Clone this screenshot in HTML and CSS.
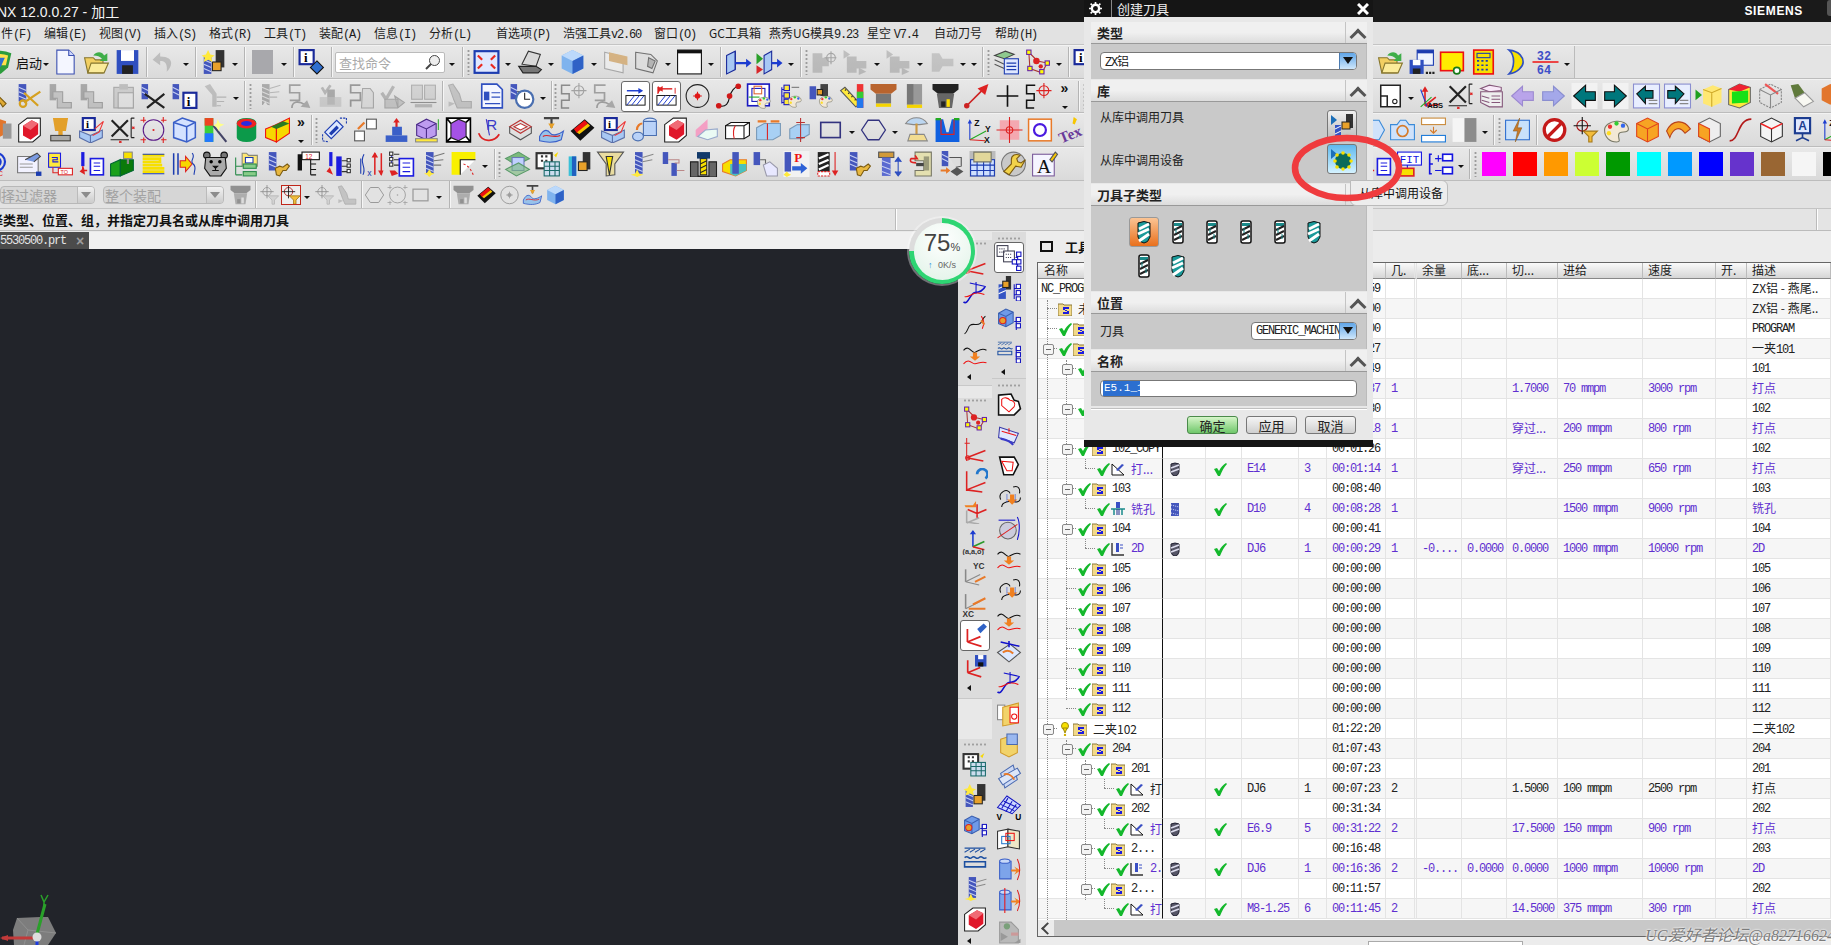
FILE: index.html
```html
<!DOCTYPE html>
<html lang="zh-CN">
<head>
<meta charset="utf-8">
<title>NX 12.0.0.27 - 加工</title>
<link rel="stylesheet" href="styles.css">
</head>
<body>
<svg class="sprite" xmlns="http://www.w3.org/2000/svg">
<symbol id="logo" viewBox="0 0 24 24"><path d="M2 4q10-5 20 0l-3 13-7 6-7-6z" fill="#2c9c3c"/><path d="M5 6q7-3 14 0l-2 9H7z" fill="#ffe04a"/><path d="M9 8h7l-4 9z" fill="#2f6fd0"/></symbol>
<symbol id="doc" viewBox="0 0 24 24"><path d="M4 1h11l5 5v17H4z" fill="#f4f6ff" stroke="#3a4fb0"/><path d="M15 1v5h5" fill="#cfd8ff" stroke="#3a4fb0"/></symbol>
<symbol id="open" viewBox="0 0 24 24"><path d="M1 8h8l2 2h7v12H4z" fill="#f2cf62" stroke="#86762e"/><path d="M4 22l3-9h16l-4 9z" fill="#fbeb9a" stroke="#86762e"/><path d="M9 6c3-4 8-4 10 0l3-2v7h-7l2-2c-2-2-4-3-8-3" fill="#3fae49"/></symbol>
<symbol id="save" viewBox="0 0 24 24"><path d="M2 1h20v22H2z" fill="#2f4fc0"/><rect x="6" y="1" width="12" height="10" fill="#fff"/><rect x="7" y="15" width="10" height="8" fill="#222"/></symbol>
<symbol id="undo" viewBox="0 0 24 24"><path d="M8 3L1 10l7 5v-4c4 0 7 2 6 10 5-4 8-14-6-14z" fill="#7c8ea8"/></symbol>
<symbol id="mt" viewBox="0 0 24 24"><rect x="3" y="7" width="7" height="16" fill="#4456bc"/><path d="M3 10l7 3M3 14l7 3M3 18l7 3" stroke="#c6cff2"/><rect x="14" y="1" width="8" height="16" fill="#333"/><rect x="11" y="12" width="8" height="8" fill="#e8a12a" stroke="#222"/><path d="M7 1l2 4 4 1-3 2 1 4-4-2-4 2 1-4-3-2 4-1z" fill="#ffe93c"/></symbol>
<symbol id="inf" viewBox="0 0 24 24"><rect x="1" y="1" width="13" height="13" fill="#fff" stroke="#1a2a9a" stroke-width="2"/><text x="5" y="12" font-size="12" font-weight="700" font-family="Liberation Serif">i</text><path d="M17 11l6 6-6 6-6-6z" fill="#2f6fd0" stroke="#111"/></symbol>
<symbol id="fit" viewBox="0 0 24 24"><rect x="1" y="2" width="22" height="20" fill="#dfe8ff" stroke="#1c3cb0" stroke-width="2"/><path d="M4 6l4 4M20 6l-4 4M4 18l4-4M20 18l-4-4" stroke="#ea2a20" stroke-width="2"/></symbol>
<symbol id="rend" viewBox="0 0 24 24"><path d="M5 14L11 2l11 3-4 11z" fill="#d9d9d9" stroke="#333"/><path d="M2 16l16 0 5 3-3 3H6z" fill="#777" stroke="#222"/></symbol>
<symbol id="cub" viewBox="0 0 24 24"><path d="M2 6l10-5 10 5v12l-10 5-10-5z" fill="#7fb3ee"/><path d="M2 6l10 5 10-5-10-5z" fill="#bcd9fb"/><path d="M12 11l10-5v12l-10 5z" fill="#2f62c6"/></symbol>
<symbol id="tan" viewBox="0 0 24 24"><path d="M2 3l17 4v15L2 18z" fill="#eee" stroke="#999"/><path d="M6 3l17 4v8L6 11z" fill="#dba65c"/></symbol>
<symbol id="gf" viewBox="0 0 24 24"><path d="M2 3l14 2 6 6-4 11-16-4z" fill="#ddd" stroke="#555"/><path d="M14 8l6 3-3 7-4-2z" fill="#aaa" stroke="#555"/></symbol>
<symbol id="win" viewBox="0 0 24 24"><rect x="1" y="1" width="22" height="22" fill="#fff" stroke="#111"/><rect x="1" y="1" width="22" height="3" fill="#111"/></symbol>
<symbol id="ba" viewBox="0 0 24 24"><path d="M1 6l8-4v17l-8 4z" fill="#a8c8f4" stroke="#1a2a9a"/><path d="M9 2v17" stroke="#1a2a9a"/><path d="M9 12h10v-3l5 4-5 4v-3H9z" fill="#1c3cd0"/></symbol>
<symbol id="ba2" viewBox="0 0 24 24"><path d="M7 6l7-4v17l-7 4z" fill="#a8c8f4" stroke="#1a2a9a"/><path d="M14 12h5V9l5 4-5 4v-3h-5z" fill="#1c3cd0"/><path d="M0 4l6 5-6 5z" fill="#2aa02a"/><path d="M0 15l6 4-6 4z" fill="#d8262a"/></symbol>
<symbol id="tp" viewBox="0 0 24 24"><path d="M1 4h9v4h6v8h-6v6H1z" fill="#888"/><circle cx="18" cy="8" r="4" fill="none" stroke="#b33"/><path d="M12 8h11M18 2v12" stroke="#b33"/></symbol>
<symbol id="tp2" viewBox="0 0 24 24"><path d="M1 1l6 4-6 4z" fill="#5f93bb"/><path d="M4 7h9v4h9v7h-9v4H4z" fill="#888"/><path d="M15 17l7 4-7 3z" fill="#957ca8"/></symbol>
<symbol id="tp4" viewBox="0 0 24 24"><path d="M3 4h7l3 5h10v7H13l-3 5H3z" fill="#9a9a9a"/></symbol>
<symbol id="lst" viewBox="0 0 24 24"><path d="M1 6l10-4 8 3-9 4z" fill="#8fc98f" stroke="#444"/><path d="M1 10l9 4M1 14l9 4" stroke="#555" fill="none"/><rect x="10" y="9" width="13" height="14" fill="#dfe8ff" stroke="#1c3cb0"/><path d="M12 13h9M12 16h9M12 19h9" stroke="#1c3cb0"/></symbol>
<symbol id="net" viewBox="0 0 24 24"><path d="M4 3l8 8 9 2-5 9-11-4z" fill="none" stroke="#a33"/><circle cx="11" cy="11" r="3" fill="#d22"/><circle cx="15" cy="16" r="2" fill="#d22"/><g fill="#ff0" stroke="#62a"><rect x="2" y="1" width="4" height="4"/><rect x="19" y="11" width="4" height="4"/><rect x="14" y="19" width="4" height="4"/><rect x="3" y="16" width="4" height="4"/></g></symbol>
<symbol id="wrn" viewBox="0 0 24 24"><path d="M10 10l9 9-3 3-2-3-3-3-5 2-4-3 3-6 4 1z" fill="#e0aa35" stroke="#7a5a10"/></symbol>
<symbol id="msc" viewBox="0 0 24 24"><rect x="2" y="1" width="7" height="16" fill="#4456bc"/><path d="M2 4l7 3M2 8l7 3M2 12l7 3" stroke="#c6cff2"/><path d="M7 18l15-10M7 9l13 12" stroke="#d5a020" stroke-width="2"/><circle cx="6" cy="19" r="3" fill="none" stroke="#d5a020" stroke-width="2"/></symbol>
<symbol id="cp" viewBox="0 0 24 24"><rect x="2" y="1" width="6" height="15" fill="#555"/><path d="M5 8h9v10h8v5H9V14H5z" fill="#999" stroke="#444"/></symbol>
<symbol id="clip" viewBox="0 0 24 24"><rect x="4" y="4" width="18" height="19" fill="#c9a98c" stroke="#555"/><rect x="9" y="1" width="8" height="5" fill="#888"/><rect x="8" y="9" width="14" height="14" fill="#ddd" stroke="#555"/></symbol>
<symbol id="mx" viewBox="0 0 24 24"><rect x="1" y="1" width="6" height="14" fill="#4456bc"/><path d="M1 4l6 3M1 8l6 3" stroke="#c6cff2"/><path d="M4 10l18 13M22 10L6 23" stroke="#222" stroke-width="2"/></symbol>
<symbol id="mi" viewBox="0 0 24 24"><rect x="1" y="1" width="6" height="14" fill="#4456bc"/><path d="M1 4l6 3M1 8l6 3" stroke="#c6cff2"/><rect x="11" y="9" width="12" height="14" fill="#fff" stroke="#1a2a9a" stroke-width="2"/><text x="14" y="21" font-size="12" font-weight="700" font-family="Liberation Serif">i</text></symbol>
<symbol id="gt" viewBox="0 0 24 24"><path d="M2 3l5-2 6 9v12h-4V11z" fill="#8b8b8b"/><path d="M13 13h9M13 17h7M13 21h4" stroke="#777"/></symbol>
<symbol id="mf" viewBox="0 0 24 24"><rect x="6" y="1" width="7" height="20" fill="#4456bc"/><path d="M6 4l7 3M6 8l7 3M6 12l7 3M6 16l7 3" stroke="#c6cff2"/><path d="M13 5l10-3M13 9l9-1M13 13l7 0" stroke="#777" fill="none"/><path d="M9 17l2 3 3 1-3 1-2 2-2-2-3-1 3-1z" fill="#ffe93c"/></symbol>
<symbol id="sa" viewBox="0 0 24 24"><path d="M13 2H3v7h9v7H3M5 23c0-6 6-7 12-3" fill="none" stroke="#444" stroke-width="1.6"/><path d="M13 22l6-6 3 7z" fill="#2f62c6"/></symbol>
<symbol id="chk" viewBox="0 0 24 24"><path d="M4 4l3 5 5-7" fill="none" stroke="#1d9a1d" stroke-width="2.5"/><rect x="9" y="6" width="7" height="14" fill="#4456bc"/><path d="M2 22V13h20v9z" fill="#b88b56" fill-opacity=".7"/></symbol>
<symbol id="sp" viewBox="0 0 24 24"><path d="M11 2H2v7h9v7H2v6" fill="none" stroke="#333" stroke-width="1.6"/><path d="M13 5h7l3 4v14H12z" fill="#ccc" stroke="#555"/></symbol>
<symbol id="ck2" viewBox="0 0 24 24"><path d="M2 9l4 6 7-12" fill="none" stroke="#1d9a1d" stroke-width="3"/><path d="M5 15h12v8H5zM14 12l9 6-6 5z" fill="#999" stroke="#555"/></symbol>
<symbol id="bk" viewBox="0 0 24 24"><rect x="1" y="2" width="10" height="13" fill="#bbb" stroke="#666"/><rect x="13" y="2" width="10" height="13" fill="#bbb" stroke="#666"/><path d="M0 18h24" stroke="#222"/><path d="M4 21h16" stroke="#77a" stroke-width="3"/></symbol>
<symbol id="gm" viewBox="0 0 24 24"><path d="M1 2l4-1 6 9 2 7h9v6H9l-3-7z" fill="#999" stroke="#666"/><path d="M1 17l6 2-6 3z" fill="#b78c38"/></symbol>
<symbol id="dl" viewBox="0 0 24 24"><path d="M3 1h14l5 5v17H3z" fill="#f4f6ff" stroke="#2f4fc0" stroke-width="1.5"/><rect x="5" y="8" width="5" height="8" fill="#2f4fc0"/><path d="M12 9h8M12 13h8M6 19h14" stroke="#2f4fc0"/></symbol>
<symbol id="mc" viewBox="0 0 24 24"><rect x="1" y="1" width="6" height="14" fill="#4456bc"/><path d="M1 4l6 3M1 8l6 3" stroke="#c6cff2"/><path d="M7 8h8" stroke="#555"/><circle cx="14" cy="15" r="8" fill="#fff" stroke="#4a6fb0" stroke-width="2"/><path d="M14 9v6h5" stroke="#222" fill="none"/></symbol>
<symbol id="hb1" viewBox="0 0 24 24"><path d="M3 6h15" stroke="#1c3cd0" stroke-width="1.5"/><path d="M15 3l5 3-5 3z" fill="#1c3cd0"/><rect x="2" y="11" width="20" height="10" fill="#fff" stroke="#111"/><path d="M3 21l8-10M8 21l8-10M13 21l8-10" stroke="#1c3cd0"/></symbol>
<symbol id="hb2" viewBox="0 0 24 24"><path d="M6 4h12" stroke="#d22" stroke-width="1.5"/><path d="M3 9V2h1l2 3-2 2zM21 9V3" stroke="#d22" fill="#d22"/><path d="M8 1L3 4l5 3z" fill="#d22"/><rect x="2" y="11" width="20" height="10" fill="#fff" stroke="#111"/><path d="M3 21l8-10M8 21l8-10M13 21l8-10" stroke="#1c3cd0"/></symbol>
<symbol id="cir" viewBox="0 0 24 24"><circle cx="12" cy="12" r="10.5" fill="none" stroke="#222"/><circle cx="12" cy="12" r="2.5" fill="#e01818"/><path d="M12 8v8M8 12h8" stroke="#e01818"/></symbol>
<symbol id="cur" viewBox="0 0 24 24"><path d="M3 21c7 2 9-3 10-8s5-10 8-10" fill="none" stroke="#111"/><circle cx="3" cy="21" r="2.6" fill="#d01818"/><circle cx="13" cy="12" r="2.6" fill="#d01818"/><circle cx="21" cy="3" r="2.6" fill="#d01818"/></symbol>
<symbol id="dots" viewBox="0 0 24 24"><path d="M1 12C1 3 22 0 23 11c0 5-8 1-9 5s3 7-2 7C6 23 1 19 1 12z" fill="#f2e8d5" stroke="#776"/><circle cx="6" cy="9" r="2" fill="#e33"/><circle cx="12" cy="6" r="2" fill="#3c3"/><circle cx="18" cy="8" r="2" fill="#36e"/><circle cx="5" cy="15" r="2" fill="#fd2"/></symbol>
<symbol id="pa1" viewBox="0 0 24 24"><rect x="1" y="1" width="20" height="20" fill="#fff" stroke="#1a1ac0" stroke-width="1.5"/><rect x="5" y="5" width="12" height="12" fill="none" stroke="#1a1ac0"/><path d="M2 13h10" stroke="#2a2"/><rect x="7" y="3" width="7" height="7" fill="none" stroke="#d63"/><use href="#dots" x="9" y="11" width="14" height="13"/></symbol>
<symbol id="pa2" viewBox="0 0 24 24"><path d="M4 4v15M4 6h4M4 12h4M4 18h4" stroke="#1a1ac0" fill="none"/><g fill="#ffe93c" stroke="#1a1ac0"><rect x="6" y="2" width="5" height="5"/><rect x="6" y="9" width="5" height="5"/><rect x="6" y="15" width="5" height="5"/></g><path d="M13 4h7" stroke="#777"/><use href="#dots" x="9" y="10" width="14" height="13"/></symbol>
<symbol id="pa3" viewBox="0 0 24 24"><rect x="1" y="3" width="6" height="12" fill="#4456bc"/><rect x="11" y="1" width="7" height="11" fill="#444"/><rect x="8" y="6" width="5" height="5" fill="#e8a12a" stroke="#222"/><use href="#dots" x="9" y="10" width="14" height="13"/></symbol>
<symbol id="rul" viewBox="0 0 24 24"><path d="M1 7l4-3 14 15-4 3z" fill="#ffe93c" stroke="#555"/><path d="M5 7l1-1M8 10l1-1M11 13l1-1M14 16l1-1" stroke="#333"/><path d="M16 1h6v22h-6z" fill="#e33"/><path d="M16 8h6v6h-6z" fill="#3c3"/><path d="M16 14h6v9h-6z" fill="#27e"/></symbol>
<symbol id="h1" viewBox="0 0 24 24"><path d="M0 1h24v5l-5 4H5L0 6z" fill="#b9642e"/><rect x="5" y="10" width="14" height="9" fill="#777"/><rect x="5" y="19" width="14" height="3" fill="#f5d400"/></symbol>
<symbol id="h2" viewBox="0 0 24 24"><rect x="5" y="1" width="14" height="19" fill="#999"/><rect x="5" y="1" width="6" height="19" fill="#777"/><rect x="5" y="20" width="14" height="3" fill="#f5d400"/></symbol>
<symbol id="h3" viewBox="0 0 24 24"><path d="M0 1h24v5l-5 4H5L0 6z" fill="#222"/><path d="M4 10h16l-2 13H6z" fill="#666"/><rect x="13" y="15" width="3" height="7" fill="#fd0"/><rect x="8" y="17" width="4" height="5" fill="#222"/></symbol>
<symbol id="ra" viewBox="0 0 24 24"><path d="M3 21L19 5" stroke="#c22" stroke-width="1.5"/><path d="M23 1l-3 10-7-6z" fill="#d22"/><circle cx="3" cy="21" r="2.5" fill="#c22"/></symbol>
<symbol id="plus" viewBox="0 0 24 24"><path d="M12 2v20M2 12h20" stroke="#111" stroke-width="1.5"/></symbol>
<symbol id="st" viewBox="0 0 24 24"><path d="M9 2H1v8h7v6H1v7h7" fill="none" stroke="#111" stroke-width="1.4"/><circle cx="17" cy="7" r="4.5" fill="none" stroke="#d22"/><path d="M10 7h14M17 0v14" stroke="#d22"/></symbol>
<symbol id="bx" viewBox="0 0 24 24"><path d="M3 2h18v20H3zM3 12h6v10M3 2v10" fill="#fff" stroke="#222" stroke-width="1.4"/><circle cx="16" cy="17" r="2" fill="none" stroke="#222"/></symbol>
<symbol id="ax" viewBox="0 0 24 24"><path d="M6 21V6M6 21l13-1M6 21l10-8" stroke="#d22" fill="none" stroke-width="1.5"/><path d="M3 8l3-5 3 5z" fill="#d22"/><path d="M2 6l6 16" stroke="#1c3cd0"/><path d="M2 22l10-9" stroke="#2a2"/><text x="8" y="23" font-size="7" font-weight="700" font-family="Liberation Sans" fill="#111">ABS</text></symbol>
<symbol id="xd" viewBox="0 0 24 24"><path d="M2 3l15 15M17 3L2 18" stroke="#222" stroke-width="2"/><path d="M1 21h17M20 1v18M20 1h3M20 19h3" stroke="#222" fill="none"/><path d="M21 9l2 2M23 9l-2 2M9 22l2 2M11 22l-2 2" stroke="#d22"/></symbol>
<symbol id="stk" viewBox="0 0 24 24"><path d="M2 5l8-3 11 2v3L10 8z" fill="#f8e8f8" stroke="#85577a"/><path d="M2 8v10l8 4h12V8H10z" fill="#eee" stroke="#85577a"/><path d="M12 12h8M12 15h8M12 18h8M3 12l7 2M3 16l7 2" stroke="#85577a"/></symbol>
<symbol id="al" viewBox="0 0 24 24"><path d="M2 12l10-9v5h10v8H12v5z" fill="#b9a4ea" stroke="#9c8ad0"/></symbol>
<symbol id="ar" viewBox="0 0 24 24"><path d="M22 12L12 3v5H2v8h10v5z" fill="#a4a8ea" stroke="#8a8ed0"/></symbol>
<symbol id="tl" viewBox="0 0 24 24"><rect width="24" height="24" fill="#f2f2f2"/><path d="M2 12l11-10v6h9v8h-9v6z" fill="#00777c" stroke="#111"/></symbol>
<symbol id="tr" viewBox="0 0 24 24"><rect width="24" height="24" fill="#f2f2f2"/><path d="M22 12L11 2v6H2v8h9v6z" fill="#00777c" stroke="#111"/></symbol>
<symbol id="tl2" viewBox="0 0 24 24"><rect x="0" y="1" width="24" height="22" fill="#e8eeff" stroke="#8a8ed0"/><path d="M3 10l8-7v4h7v7h-7v5z" fill="#00777c" stroke="#111"/><path d="M14 16h8M14 19h8" stroke="#888"/></symbol>
<symbol id="tr2" viewBox="0 0 24 24"><rect x="0" y="1" width="24" height="22" fill="#e8eeff" stroke="#8a8ed0"/><path d="M18 10l-8-7v4H3v7h7v5z" fill="#00777c" stroke="#111"/><path d="M14 16h8M14 19h8" stroke="#888"/></symbol>
<symbol id="yc" viewBox="0 0 24 24"><path d="M0 6l6 5-6 5z" fill="#1ea01e"/><path d="M7 6l9-4 8 3v13l-9 4-8-3z" fill="#ffe873"/><path d="M7 6l8 3 9-4M15 9v13" fill="none" stroke="#cfa929"/></symbol>
<symbol id="gc" viewBox="0 0 24 24"><path d="M2 6l10-5 10 3v14l-10 5-10-3z" fill="#ffe93c" stroke="#666"/><path d="M2 6l10-5 10 3-10 4z" fill="#e23"/><path d="M5 8l15-1v11l-15 1z" fill="#17e017"/></symbol>
<symbol id="wc" viewBox="0 0 24 24"><path d="M2 6l10-5 10 5v12l-10 5-10-5z" fill="none" stroke="#888" stroke-dasharray="2 1"/><path d="M7 1l12 9" stroke="#e55" stroke-width="2"/><path d="M2 6l10 5 10-5M12 11v12" fill="none" stroke="#888"/></symbol>
<symbol id="lamp" viewBox="0 0 24 24"><path d="M2 2l7-1 6 8-9 5z" fill="#607a3c"/><path d="M6 14l9-5 8 8-9 5z" fill="#f8f8f2" stroke="#999"/></symbol>
<symbol id="ora" viewBox="0 0 24 24"><path d="M2 5l8-4 9 3-1 12-8 4-8-4z" fill="#e2762d"/><rect x="16" y="6" width="8" height="14" fill="#999"/></symbol>
<symbol id="rc" viewBox="0 0 24 24"><path d="M2 7l8-6h12v16l-7 6H2z" fill="#fff" stroke="#222"/><path d="M6 8l8-5 6 3v10l-7 5-7-4z" fill="#e0172a"/><path d="M6 8l7 4 7-6-6-3z" fill="#f06a75"/></symbol>
<symbol id="stamp" viewBox="0 0 24 24"><path d="M5 1h14l-2 12h-3v4h7v5H3v-5h7v-4H7z" fill="#e3a02a"/><rect x="3" y="17" width="18" height="5" fill="#aaa" stroke="#444"/></symbol>
<symbol id="ib" viewBox="0 0 24 24"><path d="M1 13l10 4v7L1 19zM11 17l11-5v7l-11 5z" fill="#a8c8f4" stroke="#5a6fa8"/><rect x="4" y="1" width="11" height="11" fill="#fff" stroke="#1a2a9a" stroke-width="2"/><text x="7" y="10" font-size="10" font-weight="700" font-family="Liberation Serif">i</text><path d="M15 11l8-7-4 10-6 3" fill="none" stroke="#e33"/></symbol>
<symbol id="cp1" viewBox="0 0 24 24"><circle cx="12" cy="12" r="9.5" fill="none" stroke="#5a1a88"/><path d="M0 3h5M3 0v5M19 21h5M21 19v5M19 3h5M21 0v5M0 21h5M3 19v5" stroke="#d22"/><circle cx="12" cy="12" r="1" fill="#d22"/></symbol>
<symbol id="wc2" viewBox="0 0 24 24"><path d="M2 5l8-4 12 4v14l-8 4-12-4z" fill="#d5e2ff" stroke="#3a5fc8" stroke-width="1.4"/><path d="M2 5l12 4 8-4M14 9v14" fill="none" stroke="#3a5fc8" stroke-width="1.4"/></symbol>
<symbol id="rb" viewBox="0 0 24 24"><rect x="2" y="1" width="8" height="22" fill="#3ad03a"/><rect x="2" y="1" width="8" height="7" fill="#e42"/><rect x="2" y="15" width="8" height="8" fill="#27f"/><path d="M10 8l12 15" stroke="#446" stroke-width="2"/><path d="M14 2l2 4 4 1-4 2-1 4-2-4-3-1 3-2z" fill="#ff8"/></symbol>
<symbol id="rg" viewBox="0 0 24 24"><path d="M3 5a9 4 0 0 1 18 0v14a9 4 0 0 1-18 0z" fill="#0c9a4a"/><ellipse cx="12" cy="6" rx="9" ry="4.5" fill="#e22"/><ellipse cx="12" cy="6" rx="5" ry="2.4" fill="#2a2ae0"/></symbol>
<symbol id="yb" viewBox="0 0 24 24"><path d="M1 11l10-4v16l-10-4z" fill="#f7d800" stroke="#e11"/><path d="M11 7l12-6v14l-12 8z" fill="#f7d800" stroke="#e11"/><path d="M6 9l11-5 6 2-12 5z" fill="#2a7a22"/></symbol>
<symbol id="dm" viewBox="0 0 24 24"><path d="M3 14L14 3l6 6L9 20z" fill="#dde8ff" stroke="#1c3cb0"/><path d="M8 16l7-7" stroke="#1c3cb0" stroke-width="3"/><path d="M1 16v6l6 1M17 1h6v6" fill="none" stroke="#1c3cb0" stroke-dasharray="2 1"/></symbol>
<symbol id="sq2" viewBox="0 0 24 24"><rect x="13" y="2" width="9" height="9" fill="#fff" stroke="#555"/><rect x="2" y="13" width="9" height="9" fill="#fff" stroke="#555"/><path d="M5 11l6-6" stroke="#e87a2a" stroke-width="2"/></symbol>
<symbol id="lft" viewBox="0 0 24 24"><path d="M12 1l-3 4h2v5h2V5h2z" fill="#d22"/><rect x="8" y="9" width="9" height="8" fill="#3a5fc8"/><rect x="2" y="17" width="20" height="6" fill="#3a5fc8"/></symbol>
<symbol id="rul3" viewBox="0 0 24 24"><path d="M2 7l9-5 9 4v11l-9 4-9-4z" fill="#bd9cf0" stroke="#4a2a88"/><path d="M2 7l9 4 9-5M11 11v10" fill="none" stroke="#4a2a88"/><rect x="1" y="20" width="20" height="3" fill="#ffe93c" stroke="#888"/><path d="M22 2v10" stroke="#3a3"/></symbol>
<symbol id="pb" viewBox="0 0 24 24"><rect x="1" y="1" width="22" height="22" fill="#fff"/><path d="M5 6l7-4 7 3v13l-7 4-7-3z" fill="#a552e6" stroke="#222"/><path d="M1 1h22v22H1zM1 1l4 5M23 1l-4 4M1 23l4-4M23 23l-4-5" fill="none" stroke="#000" stroke-width="1.5"/></symbol>
<symbol id="rr" viewBox="0 0 24 24"><text x="9" y="12" font-size="14" font-family="Liberation Sans" fill="#3a3ac8">R</text><path d="M2 15c3 8 14 9 19 1" fill="none" stroke="#d22" stroke-width="1.6"/><path d="M9 2l3 15" stroke="#3a3ac8"/></symbol>
<symbol id="hx" viewBox="0 0 24 24"><path d="M2 9l10-6 10 6-10 6z" fill="none" stroke="#b33"/><path d="M2 9v6l10 6 10-6V9" fill="none" stroke="#555"/><path d="M6 9l6-3 6 3-6 3z" fill="#fff" stroke="#b33"/></symbol>
<symbol id="rel" viewBox="0 0 24 24"><path d="M5 1h14M12 1v9" stroke="#444" stroke-width="2"/><path d="M9 6l3 5 3-5z" fill="#e8a12a"/><path d="M1 18c4-8 8-6 10-3s8 1 12-2l-2 8c-6 3-12 3-20 1z" fill="#98c2ea" stroke="#3a5fc8"/><path d="M4 18c4-3 10 2 16-1" stroke="#d22" fill="none"/></symbol>
<symbol id="stripe" viewBox="0 0 24 24"><path d="M1 13L14 2l9 8-13 12z" fill="#111"/><path d="M4 11L14 3l3 3-10 9z" fill="#e11"/><path d="M7 14l10-8 2 2-10 8z" fill="#f7c600"/></symbol>
<symbol id="cyl" viewBox="0 0 24 24"><ellipse cx="17" cy="4" rx="6" ry="3" fill="#dbe8ff" stroke="#4a6fb0"/><path d="M11 4v13h12V4z" fill="#b9d2f8" stroke="#4a6fb0"/><ellipse cx="6" cy="18" rx="5" ry="4" fill="#b9d2f8" stroke="#4a6fb0"/><path d="M5 12c0-4 3-6 5-6" stroke="#e87a2a" stroke-width="2" fill="none"/></symbol>
<symbol id="pl" viewBox="0 0 24 24"><path d="M13 2L2 12v6l11 3z" fill="#f49fc4"/><path d="M11 12l11-1v7l-9 3-9-3z" fill="#eafaf4" stroke="#9ac"/></symbol>
<symbol id="slice" viewBox="0 0 24 24"><path d="M1 8l5-3h17v12l-5 3H1z" fill="#fff" stroke="#111"/><path d="M1 8h17v12M18 8l5-3" fill="none" stroke="#111"/><path d="M10 8c-2 3-2 8-1 12" stroke="#d22" fill="none"/></symbol>
<symbol id="mov" viewBox="0 0 24 24"><path d="M1 10l7-4h15v11l-7 4H1z" fill="#a8d0f4" stroke="#7a9ab8"/><path d="M11 6v15" stroke="#d22"/><path d="M2 4h8M14 4h8" stroke="#e87a2a" stroke-width="2"/></symbol>
<symbol id="mv2" viewBox="0 0 24 24"><path d="M3 11l7-4h11v9l-7 4H3z" fill="#a8d0f4" stroke="#7a9ab8"/><path d="M13 1v22M9 5h8M9 19h8" stroke="#b33"/></symbol>
<symbol id="rect" viewBox="0 0 24 24"><rect x="3" y="5" width="18" height="14" fill="none" stroke="#33337f" stroke-width="1.5"/></symbol>
<symbol id="hex" viewBox="0 0 24 24"><path d="M7 3h10l6 9-6 9H7l-6-9z" fill="none" stroke="#33337f" stroke-width="1.2"/></symbol>
<symbol id="it" viewBox="0 0 24 24"><path d="M2 6c5-7 15-7 20 0l-7 1H9z" fill="#bcd6f0" stroke="#888"/><path d="M12 6v10" stroke="#c94" stroke-width="2"/><path d="M6 16h13l3 6H4z" fill="#f2dc90" stroke="#888"/></symbol>
<symbol id="cha" viewBox="0 0 24 24"><path d="M1 2h7l3 12h2l3-12h7v21H1z" fill="#1060e0"/><path d="M6 2v14h12V2" fill="none" stroke="#d22"/><path d="M1 2h5M18 2h5" stroke="#2a2" stroke-width="2"/></symbol>
<symbol id="csy" viewBox="0 0 24 24"><path d="M4 21V5" stroke="#1c3cd0"/><path d="M4 21L19 13" stroke="#2a2"/><path d="M4 21l14 1" stroke="#d22"/><path d="M2 6l2-4 2 4z" fill="#1c3cd0"/><text x="8" y="8" font-size="8" font-weight="700" font-family="Liberation Sans" fill="#111">Z</text><text x="18" y="14" font-size="8" font-weight="700" font-family="Liberation Sans" fill="#111">Y</text><text x="17" y="24" font-size="8" font-weight="700" font-family="Liberation Sans" fill="#111">X</text></symbol>
<symbol id="tar" viewBox="0 0 24 24"><rect x="3" y="3" width="18" height="18" fill="#f4a8b0"/><path d="M12 0v24M0 12h24" stroke="#d22"/><circle cx="12" cy="12" r="3" fill="none" stroke="#d22"/></symbol>
<symbol id="co" viewBox="0 0 24 24"><rect x="1" y="2" width="21" height="20" fill="#fff" stroke="#e87a2a" stroke-width="1.4"/><circle cx="11.5" cy="12" r="5.5" fill="none" stroke="#4a1ae0" stroke-width="2"/></symbol>
<symbol id="tex" viewBox="0 0 24 24"><text x="0" y="21" font-size="14" font-weight="700" font-family="Liberation Serif" fill="#6a3a9a" transform="rotate(-22 10 16)">Tex</text><path d="M14 0l3 2-2 5-2-1z" fill="#f7c600"/></symbol>
<symbol id="hxb" viewBox="0 0 24 24"><path d="M5 3h14l5 9-5 9H5z" fill="#cfe2fb" stroke="#3a8ad8"/></symbol>
<symbol id="cam" viewBox="0 0 24 24"><path d="M1 7h6l3-4h5l3 4h5v14H1z" fill="#cfe2fb" stroke="#3a8ad8"/><circle cx="12" cy="13" r="5" fill="none" stroke="#d57a2a" stroke-width="1.6"/></symbol>
<symbol id="lt" viewBox="0 0 24 24"><rect x="1" y="1" width="22" height="6" fill="#fff" stroke="#c98a3a"/><rect x="1" y="17" width="22" height="6" fill="#fff" stroke="#1a78d8"/><path d="M12 9v6M9 12l3 3 3-3" fill="none" stroke="#d57a2a"/></symbol>
<symbol id="gw" viewBox="0 0 24 24"><rect x="1" y="1" width="11" height="22" fill="#f5f5f5"/><rect x="12" y="1" width="11" height="22" fill="#8c8c8c"/></symbol>
<symbol id="lb" viewBox="0 0 24 24"><rect x="1" y="3" width="22" height="18" fill="#c9e1fb" stroke="#2f6fd0"/><path d="M14 1l-6 12h4l-2 10 6-13h-4z" fill="#c87a2a" stroke="#8a5a1a" stroke-width=".5"/></symbol>
<symbol id="no" viewBox="0 0 24 24"><circle cx="12" cy="12" r="9.5" fill="#fff" stroke="#c41a1a" stroke-width="3"/><path d="M6 18L18 6" stroke="#c41a1a" stroke-width="3"/></symbol>
<symbol id="fil" viewBox="0 0 24 24"><circle cx="9" cy="8" r="5" fill="none" stroke="#a11"/><path d="M1 8h16M9 0v16" stroke="#111"/><path d="M10 13h13l-5 5v5h-3v-5z" fill="#f2bc3a" stroke="#a5791a"/></symbol>
<symbol id="oc" viewBox="0 0 24 24"><path d="M2 6l10-5 10 5v12l-10 5-10-5z" fill="#f7a423" stroke="#e0431c"/><path d="M2 6l10 5 10-5M12 11v12" fill="none" stroke="#e0431c"/></symbol>
<symbol id="osf" viewBox="0 0 24 24"><path d="M1 13C6 2 17 2 23 11l-5 4C13 8 7 10 4 19z" fill="#f7a423" stroke="#b8431c"/></symbol>
<symbol id="oc2" viewBox="0 0 24 24"><path d="M2 6l10-5 10 5v12l-10 5-10-5z" fill="#eee" stroke="#666"/><path d="M2 6l10 5v12l-10-5z" fill="#f7a423" stroke="#e0431c"/></symbol>
<symbol id="cu" viewBox="0 0 24 24"><path d="M2 22c9 0 7-20 20-20" fill="none" stroke="#b31a1a" stroke-width="1.5"/></symbol>
<symbol id="wc3" viewBox="0 0 24 24"><path d="M2 6l10-5 10 5v12l-10 5-10-5z" fill="#f5f5f5" stroke="#333"/><path d="M2 6l10 5 10-5" fill="none" stroke="#e22" stroke-width="1.3"/><path d="M12 11v12" stroke="#333"/></symbol>
<symbol id="al2" viewBox="0 0 24 24"><rect x="5" y="1" width="14" height="14" fill="#dfe8ff" stroke="#1c3c90" stroke-width="2"/><text x="8" y="12" font-size="11" font-weight="700" font-family="Liberation Sans" fill="#1c3c90">A</text><path d="M12 15v5M6 22l6-3 6 3" stroke="#1c3c90" fill="none" stroke-width="1.5"/></symbol>
<symbol id="nc" viewBox="0 0 24 24"><circle cx="10" cy="10" r="8" fill="none" stroke="#1c3cd0" stroke-width="2"/><circle cx="10" cy="10" r="4" fill="none" stroke="#1c3cd0" stroke-width="2"/><text x="6" y="23" font-size="7" fill="#d22" font-family="Liberation Sans">NC</text></symbol>
<symbol id="ed" viewBox="0 0 24 24"><path d="M1 5h19v15H1z" fill="#f2f2ff" stroke="#777"/><path d="M8 8l11-6 3 3-6 5" fill="#7a9ae0" stroke="#444"/><path d="M3 12h12M3 15h12" stroke="#999"/><rect x="18" y="19" width="5" height="4" fill="#1c3cb0"/></symbol>
<symbol id="ft" viewBox="0 0 24 24"><rect x="1" y="2" width="11" height="13" fill="#ffe93c" stroke="#1c1ce0"/><path d="M4 6h5v2H5v2h5" stroke="#1c1ce0" fill="none"/><path d="M5 15v5h5" stroke="#d22" fill="none"/><rect x="10" y="16" width="13" height="6" fill="#fff" stroke="#d22"/><text x="12" y="21.5" font-size="5" fill="#d22" font-family="Liberation Sans">TO</text></symbol>
<symbol id="lre" viewBox="0 0 24 24"><path d="M4 1v13" stroke="#1c1ce0" stroke-width="3"/><path d="M4 14v4h4" stroke="#d22" stroke-width="1.5" fill="none"/><path d="M5 15l-4 4 5 3z" fill="#d22"/><rect x="11" y="7" width="12" height="15" fill="#fff" stroke="#1c1ce0" stroke-width="1.5"/><path d="M14 11h6M14 14h6M14 18h6" stroke="#1c1ce0"/></symbol>
<symbol id="gb" viewBox="0 0 24 24"><path d="M1 12l9-4v15l-9 0z" fill="#1aa01a" stroke="#063"/><path d="M10 8h12v10l-12 5z" fill="#0a7a0a" stroke="#063"/><rect x="13" y="1" width="8" height="6" fill="#f7e000" stroke="#888"/><path d="M17 7v5" stroke="#888" stroke-width="2"/></symbol>
<symbol id="ys" viewBox="0 0 24 24"><path d="M2 4h20M2 7h16v3H2M2 13h18M2 16h20M2 19h20" fill="none" stroke="#f7df00" stroke-width="2.4"/><path d="M2 3h20M2 21h20" stroke="#1c3cb0"/></symbol>
<symbol id="ysb" viewBox="0 0 24 24"><path d="M2 3h20M2 7l5-3M7 7l5-3M12 7l5-3M17 7l5-3" stroke="#1c4fa0" fill="none"/><path d="M2 12c4-3 4 3 7 0s4 3 7 0 4 3 7 0M2 16h20v5H2z" fill="none" stroke="#1c4fa0" stroke-width="1.5"/></symbol>
<symbol id="br" viewBox="0 0 24 24"><path d="M2 2v20M6 2v20" stroke="#1c3cb0" stroke-width="1.4"/><path d="M8 9h5V5l6 7-6 7v-4H8z" fill="#f7d800" stroke="#d22"/><path d="M19 2c4 4-3 7 1 10s0 8 1 10" fill="none" stroke="#1c3cb0"/></symbol>
<symbol id="bear" viewBox="0 0 24 24"><circle cx="4" cy="4" r="3" fill="#777" stroke="#111"/><circle cx="20" cy="4" r="3" fill="#777" stroke="#111"/><path d="M3 6h18l1 10-5 7H7l-5-7z" fill="#aaa" stroke="#111"/><circle cx="8" cy="10" r="1.6"/><circle cx="16" cy="10" r="1.6"/><path d="M10 14h4l-2 2zM12 16v2M9 18h6" stroke="#111"/></symbol>
<symbol id="ftree" viewBox="0 0 24 24"><path d="M8 2h4l2 2h8v10H8z" fill="#ffe873" stroke="#887"/><rect x="11" y="6" width="7" height="5" fill="#fff" stroke="#1c3cb0"/><path d="M2 6v16M2 14h6M2 22h6" fill="none" stroke="#2a8a4a"/><rect x="9" y="12" width="12" height="4" fill="#8c8" stroke="#2a8a4a"/><rect x="9" y="19" width="12" height="4" fill="#8c8" stroke="#2a8a4a"/></symbol>
<symbol id="vtree" viewBox="0 0 24 24"><g fill="#fff" stroke="#445"><rect x="1" y="1" width="10" height="10"/><rect x="7" y="6" width="10" height="10"/></g><path d="M3 4h6M3 7h6M9 9h6M9 12h6" stroke="#445" stroke-dasharray="1 1"/><path d="M20 8v14M20 12h-2M20 18h-2" stroke="#1414c0" fill="none"/><g fill="#fff" stroke="#1414c0"><rect x="15" y="14" width="4" height="4"/><rect x="19" y="7" width="4" height="4"/><rect x="19" y="14" width="4" height="4"/><rect x="19" y="20" width="4" height="4"/></g></symbol>
<symbol id="vmt" viewBox="0 0 24 24"><rect x="2" y="8" width="7" height="14" fill="#3454c4"/><path d="M2 12l7-3M2 17l7-3" stroke="#fff"/><rect x="9" y="0" width="5" height="13" fill="#333"/><rect x="6" y="5" width="6" height="6" fill="#e8a12a" stroke="#222"/><path d="M17 8v14M17 12h2M17 18h2" stroke="#1414c0" fill="none"/><g fill="#fff" stroke="#1414c0"><rect x="19" y="8" width="4" height="4"/><rect x="19" y="14" width="4" height="4"/><rect x="19" y="20" width="4" height="4"/></g></symbol>
<symbol id="vcb" viewBox="0 0 24 24"><path d="M2 6l7-4 7 3v10l-7 4-7-3z" fill="#6f9ae8" stroke="#3a5fb0"/><path d="M2 6l7 3 7-4M9 9v10" fill="none" stroke="#3a5fb0"/><circle cx="6" cy="13" r="3" fill="#e8a12a" stroke="#d22"/><path d="M19 10v12M19 14h-2" stroke="#1414c0"/><g fill="#fff" stroke="#1414c0"><rect x="19" y="10" width="4" height="4"/><rect x="19" y="16" width="4" height="4"/></g></symbol>
<symbol id="vys" viewBox="0 0 24 24"><use href="#ysb" width="16" height="20" y="0"/><path d="M19 8v13" stroke="#1414c0"/><g fill="#fff" stroke="#1414c0"><rect x="19" y="8" width="4" height="4"/><rect x="19" y="14" width="4" height="4"/><rect x="19" y="20" width="4" height="4"/></g></symbol>
<symbol id="mw" viewBox="0 0 24 24"><rect x="4" y="1" width="7" height="17" fill="#4456bc"/><path d="M4 4l7 3M4 8l7 3M4 12l7 3" stroke="#c6cff2"/><path d="M10 16l4-2 3 1 4-3 2 2-3 4-3 0-3 5-3-1z" fill="#e8b840" stroke="#7a5a10"/></symbol>
<symbol id="mt12" viewBox="0 0 24 24"><rect x="2" y="3" width="4" height="15" fill="#111"/><rect x="6" y="1" width="16" height="7" fill="#fff" stroke="#111"/><text x="9" y="7" font-size="6" fill="#d22" font-family="Liberation Sans">12</text><path d="M14 8v14M14 12h5M14 17h5M14 22h5" stroke="#111"/></symbol>
<symbol id="ltr" viewBox="0 0 24 24"><path d="M4 1v13" stroke="#1c1ce0" stroke-width="3"/><path d="M3 15l-3 4 6 3z" fill="#d22"/><rect x="9" y="5" width="5" height="18" fill="#1c1ce0"/><path d="M14 9h5M14 14h5M14 19h5" stroke="#333"/><g fill="#fff" stroke="#333"><rect x="19" y="7" width="3" height="3"/><rect x="19" y="12" width="3" height="3"/><rect x="19" y="17" width="3" height="3"/></g></symbol>
<symbol id="ud" viewBox="0 0 24 24"><path d="M3 21V7" stroke="#1c3cb0"/><path d="M6 3C1 12 9 14 5 22" fill="none" stroke="#1c3cb0"/><path d="M16 2v20M22 2v20" stroke="#d22" stroke-width="1.4"/><path d="M13 6l3-5 3 5zM19 18l3 5 2-5z" fill="#d22"/><text x="9" y="23" font-size="8" fill="#1c3cb0" font-family="Liberation Sans">x</text></symbol>
<symbol id="lli" viewBox="0 0 24 24"><path d="M3 2v12" stroke="#1c1ce0"/><g fill="#fff" stroke="#333"><rect x="1" y="1" width="3" height="3"/><rect x="1" y="6" width="3" height="3"/><rect x="1" y="11" width="3" height="3"/></g><path d="M5 3h5M5 8h5M5 13h5" stroke="#333"/><path d="M1 18h5l3 3-6 2z" fill="#d22"/><rect x="10" y="7" width="13" height="16" fill="#fff" stroke="#1c1ce0" stroke-width="1.5"/><path d="M13 11h7M13 15h7M13 19h7" stroke="#1c1ce0"/></symbol>
<symbol id="yc2" viewBox="0 0 24 24"><path d="M1 22V1h22v7H9v14z" fill="#f9f000"/><path d="M9 22V8h14" fill="#fff" stroke="#111"/><path d="M12 12c3 1 6 3 9 10" stroke="#d22" stroke-dasharray="2 2" fill="none"/></symbol>
<symbol id="gs" viewBox="0 0 24 24"><path d="M1 7l12-6 10 6-12 6z" fill="#7cbb7c" stroke="#5a9a6a"/><rect x="7" y="6" width="11" height="12" fill="#c0d0ff" stroke="#6a7ab8"/><path d="M1 17l12-6 10 6-12 6z" fill="#7cbb7c" fill-opacity=".6" stroke="#5a9a6a"/></symbol>
<symbol id="tbl" viewBox="0 0 24 24"><rect x="1" y="2" width="14" height="14" fill="#fff" stroke="#333" stroke-width="2"/><path d="M5 5h2M9 5h2M5 9h2M9 9h2" stroke="#333" stroke-width="2"/><rect x="8" y="10" width="14" height="13" fill="#cde" stroke="#1a6a6a"/><path d="M8 14h14M8 18h14M13 10v13M18 10v13" stroke="#1a6a6a"/><path d="M15 1l2 3 4-3-2 5z" fill="#f7d800"/></symbol>
<symbol id="bt" viewBox="0 0 24 24"><rect x="2" y="5" width="7" height="18" fill="#3ac0d8"/><rect x="5" y="5" width="4" height="18" fill="#2060c0"/><rect x="15" y="1" width="7" height="16" fill="#333"/><rect x="11" y="10" width="8" height="8" fill="#e8a12a" stroke="#222"/></symbol>
<symbol id="fun" viewBox="0 0 24 24"><path d="M0 1h24l-8 11v10l-8 1V12z" fill="#e9dca0" stroke="#555"/><path d="M8 5l3 17 3-17z" fill="#f7e000" stroke="#333"/></symbol>
<symbol id="ms" viewBox="0 0 24 24"><rect x="6" y="1" width="7" height="20" fill="#4456bc"/><path d="M6 4l7 3M6 8l7 3M6 12l7 3M6 16l7 3" stroke="#c6cff2"/><path d="M13 6l10-3M13 10l9-2" stroke="#888"/><path d="M8 17l2 4 4 1-4 1-2 1-2-1-4-1 4-1z" fill="#ffe93c"/></symbol>
<symbol id="ll" viewBox="0 0 24 24"><rect x="3" y="1" width="5" height="11" fill="#4456bc"/><rect x="11" y="11" width="5" height="12" fill="#4456bc"/><path d="M8 8h10v3h-4M16 18h7" stroke="#b88" fill="none"/></symbol>
<symbol id="hole" viewBox="0 0 24 24"><path d="M0 10h7v13h10V10h7v14H0z" fill="#666" stroke="#222"/><rect x="9" y="7" width="6" height="15" fill="#f7df00" stroke="#222"/><rect x="6" y="1" width="12" height="6" fill="#123a6a"/><path d="M9 12l6-3M9 16l6-3M9 20l6-3" stroke="#222"/></symbol>
<symbol id="cone" viewBox="0 0 24 24"><path d="M1 12l7-4h15v10l-10 5-12-4z" fill="#f7df00" stroke="#e87a2a"/><path d="M8 12h15v6l-10 5-5-2z" fill="#4ac0c0"/><rect x="10" y="1" width="6" height="20" fill="#4456bc"/></symbol>
<symbol id="ma" viewBox="0 0 24 24"><rect x="1" y="1" width="6" height="12" fill="#4456bc"/><path d="M7 8h5v6h4" stroke="#666" fill="none"/><path d="M10 13l6-3 7 6v7H13z" fill="#e8e8ff" stroke="#99a"/></symbol>
<symbol id="map2" viewBox="0 0 24 24"><rect width="24" height="24" fill="#f2f2f2"/><rect x="1" y="1" width="6" height="18" fill="#4456bc"/><text x="10" y="10" font-size="12" font-weight="700" font-family="Liberation Serif" fill="#e11">P</text><path d="M8 14h8v-3l6 5-6 5v-3H8z" fill="#2f62d6"/><path d="M3 19l2 2 2 1-4 2-3-2z" fill="#ffe93c"/></symbol>
<symbol id="dw" viewBox="0 0 24 24"><rect x="3" y="1" width="11" height="18" fill="#222"/><path d="M4 7l9-4M4 12l9-4M4 17l9-4" stroke="#fff" stroke-width="2"/><rect x="3" y="19" width="11" height="4" fill="#fff" stroke="#d22" stroke-dasharray="2 1"/><path d="M19 1v19" stroke="#d22"/><path d="M16 18l3 5 3-5z" fill="#d22"/></symbol>
<symbol id="tt" viewBox="0 0 24 24"><rect x="2" y="1" width="14" height="5" fill="#d19a3a" stroke="#555"/><rect x="5" y="6" width="8" height="17" fill="#5a6ad0"/><path d="M5 9l8 3M5 14l8 3M5 19l8 3" stroke="#c6cff2"/><path d="M20 7v15M17 10l3-4 3 4M17 19l3 4 3-4" fill="#2f4fc0" stroke="#2f4fc0"/></symbol>
<symbol id="vm" viewBox="0 0 24 24"><path d="M7 1h15v22H7v-5h8V9H7z" fill="#e4e0b0" stroke="#776"/><rect x="15" y="5" width="5" height="13" fill="#9a9a7a"/><path d="M3 7h6l-2-3M8 11c-5 0-6-1-5-4" fill="none" stroke="#d22" stroke-width="1.5"/><rect x="8" y="11" width="7" height="3" fill="#444"/></symbol>
<symbol id="vmm" viewBox="0 0 24 24"><rect x="3" y="0" width="6" height="14" fill="#4456bc"/><path d="M3 3l6 3M3 7l6 3" stroke="#c6cff2"/><path d="M10 6h11v8l-5 1" fill="#ddd" stroke="#555"/><path d="M11 19l6-4 6 4-6 4z" fill="#555"/><path d="M2 17h5v-2l4 3-4 3v-2H2z" fill="#e87a2a"/></symbol>
<symbol id="vt" viewBox="0 0 24 24"><rect width="24" height="24" fill="#bbb"/><rect x="1" y="8" width="22" height="15" fill="#cfe0ff" stroke="#1c3cb0"/><path d="M1 13h22M1 18h22M7 8v15M13 8v15M19 8v15" stroke="#1c3cb0"/><path d="M4 1h16v9H4z" fill="#e2d79a" stroke="#776"/></symbol>
<symbol id="wr" viewBox="0 0 24 24"><circle cx="12" cy="12" r="11" fill="#c9c9c9" stroke="#777"/><path d="M3 19l5 3 6-8 5 1 4-7-4 3-3-1-1-3 3-3c-4-2-8 0-8 4l0 4z" fill="#f2d24a" stroke="#7a5a10"/></symbol>
<symbol id="ta" viewBox="0 0 24 24"><rect x="1" y="3" width="20" height="20" fill="#f5f5ff" stroke="#7a5a9a"/><text x="5" y="20" font-size="18" font-family="Liberation Serif" fill="#111">A</text><path d="M17 8l5-7 2 2-5 7z" fill="#f7c600" stroke="#555"/></symbol>
<symbol id="fitb" viewBox="0 0 24 24"><rect x="1" y="1" width="22" height="12" fill="#fff" stroke="#1414e0"/><text x="3" y="11" font-size="10" fill="#1414e0" font-family="Liberation Mono">FIT</text><path d="M10 13v3" stroke="#1414e0"/><rect x="3" y="16" width="13" height="7" fill="#f7e000" stroke="#d22" stroke-width="1.5"/></symbol>
<symbol id="ilt" viewBox="0 0 24 24"><path d="M4 3H2v18h2M2 12h3" stroke="#1414e0" stroke-width="1.5" fill="none"/><path d="M7 7h6M10 4v6M7 18h6" stroke="#1414e0"/><rect x="14" y="3" width="9" height="6" fill="#fff" stroke="#1414e0" stroke-width="1.5"/><rect x="14" y="15" width="9" height="6" fill="#fff" stroke="#1414e0" stroke-width="1.5"/></symbol>
<symbol id="sw" viewBox="0 0 24 24"><rect x="1" y="3" width="21" height="17" fill="#ffec00" stroke="#e11" stroke-width="1.5"/><circle cx="16" cy="20" r="3" fill="#fff" stroke="#187a18" stroke-width="1.5"/></symbol>
<symbol id="calc" viewBox="0 0 24 24"><rect x="3" y="1" width="18" height="22" fill="#f7e000" stroke="#e11" stroke-width="1.5"/><rect x="6" y="4" width="12" height="4" fill="#f7e000" stroke="#1c3cb0"/><path d="M6 11h12M6 15h12M6 19h12" stroke="#1c3cb0" stroke-width="1.5" stroke-dasharray="2 2"/></symbol>
<symbol id="moon" viewBox="0 0 24 24"><path d="M7 1c10 1 13 7 13 11S15 22 7 23c5-5 6-17 0-22z" fill="#f7e000" stroke="#2f4fc0" stroke-width="1.5"/></symbol>
<symbol id="frac" viewBox="0 0 24 24"><text x="4" y="10" font-size="11" font-weight="700" fill="#3f4fc8" font-family="Liberation Mono">32</text><path d="M0 12h24" stroke="#e22" stroke-width="1.5"/><text x="4" y="23" font-size="11" font-weight="700" fill="#3f4fc8" font-family="Liberation Mono">64</text></symbol>
<symbol id="savw" viewBox="0 0 24 24"><rect x="8" y="1" width="15" height="14" fill="#eef4ff" stroke="#1c3cb0"/><rect x="8" y="1" width="15" height="3" fill="#1c3cb0"/><rect x="1" y="10" width="13" height="13" fill="#2f4fc0"/><rect x="4" y="10" width="7" height="5" fill="#fff"/><rect x="4" y="18" width="7" height="5" fill="#222"/><path d="M16 22h2M19 22h2M22 22h2" stroke="#222" stroke-width="2"/></symbol>
<symbol id="hrt" viewBox="0 0 24 24"><path d="M2 3l12-1 3 6 4 1 2 7-6 6H2z" fill="#fff" stroke="#111" stroke-width="1.5"/><path d="M5 7c2-2 6-2 8 1 3 0 6 3 4 6l-5 5-7-6z" fill="none" stroke="#e11"/></symbol>
<symbol id="sf" viewBox="0 0 24 24"><path d="M3 4l18 6-4 9L2 14z" fill="#dfe8ff" stroke="#3a3aa8"/><path d="M5 8l14 4" stroke="#e11"/><path d="M12 5l0 4" stroke="#e11"/><path d="M4 15c5 1 10 3 12 6" fill="none" stroke="#3a3ac8" stroke-width="2"/></symbol>
<symbol id="sh" viewBox="0 0 24 24"><path d="M3 3l14 0 4 7-5 10H7z" fill="#fff" stroke="#111" stroke-width="1.5"/><path d="M5 7l11 1-1 8-5 0z" fill="none" stroke="#e11"/></symbol>
<symbol id="cv" viewBox="0 0 24 24"><path d="M4 14c-3-7 7-12 9-6M5 21c0-5 8-6 12-5s6-1 6-4M16 2c5-2 7 2 6 6" fill="none" stroke="#111"/><path d="M13 9h4v5h3l-5 5-5-5h3z" fill="#f08020"/><path d="M10 16V8M18 16V8" stroke="#1c3cd0" stroke-dasharray="1 1"/></symbol>
<symbol id="bl" viewBox="0 0 24 24"><circle cx="11" cy="14" r="8" fill="#ccd" stroke="#666"/><path d="M1 21L20 8" stroke="#d22"/><path d="M20 1c3 6 2 16 0 22" stroke="#11c" fill="none"/><path d="M2 4h16" stroke="#11c"/></symbol>
<symbol id="cvr" viewBox="0 0 24 24"><path d="M1 7c5-6 8 3 11 2s6-5 11-2" fill="none" stroke="#111"/><path d="M1 20c5-6 8 0 11 0s6-3 11-1" fill="none" stroke="#e11"/><path d="M10 9h4v4h3l-5 4-5-4h3z" fill="#f08020"/></symbol>
<symbol id="cvb" viewBox="0 0 24 24"><path d="M2 21c5-4 2-10 10-9s6-6 10-8" fill="none" stroke="#111"/><path d="M18 4c3 4 3 8 1 12" fill="none" stroke="#e11"/><path d="M18 8l3 4" stroke="#e87a2a" stroke-width="2"/></symbol>
<symbol id="sb" viewBox="0 0 24 24"><path d="M1 12L13 4l10 8-11 9z" fill="#dce8ff" stroke="#555"/><path d="M6 12c4-3 7-2 10 1" stroke="#e87a2a" stroke-width="2" fill="none"/><path d="M4 2l18 4M12 1v6" stroke="#11c" stroke-width="1.5"/></symbol>
<symbol id="tcv" viewBox="0 0 24 24"><path d="M1 20c4 4 6-8 11-9 4 0 8-2 10-6" fill="none" stroke="#11c" stroke-width="1.5"/><path d="M2 15c5 2 8-7 19-2" stroke="#e11" fill="none"/><path d="M7 2l14 3M13 1v11" stroke="#11c"/></symbol>
<symbol id="dfo" viewBox="0 0 24 24"><rect x="1" y="3" width="7" height="14" fill="#fff" stroke="#888"/><path d="M6 5l15-4v19L6 23z" fill="#f2d36a" stroke="#d09a2a"/><rect x="13" y="5" width="8" height="15" fill="#fff" stroke="#e11"/><circle cx="17" cy="14" r="2.5" fill="none" stroke="#e11"/></symbol>
<symbol id="fcy" viewBox="0 0 24 24"><path d="M4 6l12-4 4 4v13l-8 4L4 19z" fill="#f2d36a" stroke="#d09a2a"/><path d="M10 1h10v10H10z" fill="#9ab8f0" stroke="#4a6ab0"/></symbol>
<symbol id="sfb" viewBox="0 0 24 24"><path d="M4 9l12-8 4 14-12 8z" fill="#cdd9f4" stroke="#4a6ab0"/><path d="M2 14L20 4l3 5L6 20z" fill="#dde6f8" stroke="#4a6ab0"/><path d="M7 10c4-1 8 1 10 5" stroke="#e87a2a" stroke-width="2" fill="none"/></symbol>
<symbol id="uv" viewBox="0 0 24 24"><path d="M1 12L10 1l13 9-8 8z" fill="#cdd9ff" stroke="#1414c0"/><path d="M4 9l13 6M7 6l13 6M11 3l-6 10M15 6l-6 10M19 9l-6 8" stroke="#1414c0"/><text x="0" y="24" font-size="8" font-weight="700" font-family="Liberation Sans">V</text><text x="18" y="24" font-size="8" font-weight="700" font-family="Liberation Sans">U</text></symbol>
<symbol id="mpl" viewBox="0 0 24 24"><path d="M1 5l10-2v17L1 22z" fill="#fff" stroke="#333"/><path d="M11 3l11 2v17l-11-2z" fill="#eee8c8" stroke="#333"/><rect x="5" y="10" width="8" height="7" fill="none" stroke="#27c"/><rect x="9" y="7" width="8" height="7" fill="none" stroke="#e11"/></symbol>
<symbol id="cy1" viewBox="0 0 24 24"><path d="M3 4h11v17H3z" fill="#7da4ea" stroke="#3a5fc8"/><ellipse cx="8" cy="4" rx="5" ry="2" fill="#c8d9f8" stroke="#3a5fc8"/><path d="M14 12h5l-2-3 6 4-6 4 2-3h-5z" fill="#f08020"/><path d="M20 2c3 6 3 14 0 20" fill="none" stroke="#d22"/></symbol>
<symbol id="cy2" viewBox="0 0 24 24"><use href="#cy1"/><path d="M8 0v24" stroke="#e11"/></symbol>
<symbol id="gpg" viewBox="0 0 24 24"><path d="M3 3h11l7 7v13H3z" fill="#b9b9b9" stroke="#999"/><circle cx="10" cy="7" r="3" fill="#7aa07a"/><path d="M4 13l7 4-7 4zM17 23h6v-4z" fill="#999"/><path d="M14 13h7v3h-7z" fill="#c99"/></symbol>
<symbol id="fa" viewBox="0 0 24 24"><path d="M4 1v22M2 6h5" stroke="#d22"/><path d="M4 20l18-7M4 20l16 3" stroke="#d22" stroke-width="1.5"/><circle cx="5" cy="20" r="2" fill="none" stroke="#d22"/></symbol>
<symbol id="fb" viewBox="0 0 24 24"><path d="M4 3v19M4 21l18-7M4 21l15 2" stroke="#d22" stroke-width="1.5"/><path d="M14 6a5 5 0 1 1 8 4" fill="none" stroke="#27c" stroke-width="2.5"/></symbol>
<symbol id="fc" viewBox="0 0 24 24"><path d="M4 11v12M4 23l12-5M4 22l12 2" stroke="#aaa" stroke-width="1.5"/><path d="M14 5v13M14 14l9-4M14 14l-9-4" stroke="#d22" stroke-width="1.5"/><path d="M2 6h8l3-4v6H3z" fill="#f08020"/></symbol>
<symbol id="fd" viewBox="0 0 24 24"><path d="M10 1v15" stroke="#1c3cd0" stroke-width="1.5"/><path d="M7 4l3-4 3 4z" fill="#1c3cd0"/><path d="M10 16l11-5" stroke="#2a9a2a" stroke-width="1.5"/><path d="M10 16l11 3" stroke="#d22" stroke-width="1.5"/><text x="0" y="23" font-size="7" font-weight="700" font-family="Liberation Sans" fill="#333">(a,a,o)</text></symbol>
<symbol id="fe" viewBox="0 0 24 24"><path d="M3 8v12" stroke="#888" stroke-width="1.5"/><path d="M3 20l14-7M3 20l13 3" stroke="#888"/><path d="M12 20l10-5" stroke="#e87a2a" stroke-width="2"/><text x="10" y="8" font-size="8" font-weight="700" font-family="Liberation Sans" fill="#333">YC</text></symbol>
<symbol id="ff" viewBox="0 0 24 24"><path d="M3 2v14" stroke="#888" stroke-width="1.5"/><path d="M3 16l14-7" stroke="#888"/><path d="M6 16l16 0M10 12l12-6" stroke="#e87a2a" stroke-width="2"/><text x="0" y="24" font-size="8" font-weight="700" font-family="Liberation Sans" fill="#333">XC</text></symbol>
<symbol id="fl" viewBox="0 0 24 24"><path d="M5 6v12M5 18l12-5M5 18l13 4" stroke="#d22" stroke-width="1.6"/><path d="M14 6l6-5 3 3-6 6z" fill="#2f62c6"/></symbol>
<symbol id="fs" viewBox="0 0 24 24"><path d="M5 6v12M5 18l12-5M5 18l13 4" stroke="#d22" stroke-width="1.6"/><rect x="12" y="1" width="11" height="11" fill="#2f4fc0"/><rect x="15" y="1" width="5" height="4" fill="#fff"/><rect x="15" y="8" width="5" height="4" fill="#111"/></symbol>
<symbol id="em" viewBox="0 0 24 24"><rect x="7" y="1" width="10" height="22" rx="2" fill="#fff" stroke="#111" stroke-width="1.5"/><path d="M8 3h8v3H8z" fill="#1a8a8a"/><path d="M8 10l8-4M8 15l8-4M8 20l8-4" stroke="#222" stroke-width="2"/><path d="M10 8v5M14 14v5" stroke="#1a8a8a"/></symbol>
<symbol id="dr" viewBox="0 0 24 24"><path d="M6 3q6-3 12 0v14q-2 6-6 6t-6-6z" fill="#1a9a9a" stroke="#111"/><path d="M7 9l10-5M6 14l11-5M7 21l10-7" stroke="#fff" stroke-width="3"/></symbol>
<symbol id="dlib" viewBox="0 0 24 24"><path d="M1 2l6 5-6 5z" fill="#1c6fb8"/><circle cx="13" cy="14" r="8" fill="#0a6a5a"/><g fill="#f7e000"><circle cx="13" cy="6" r="1.8"/><circle cx="13" cy="22" r="1.8"/><circle cx="5" cy="14" r="1.8"/><circle cx="21" cy="14" r="1.8"/><circle cx="7" cy="8" r="1.8"/><circle cx="19" cy="8" r="1.8"/><circle cx="7" cy="20" r="1.8"/><circle cx="19" cy="20" r="1.8"/></g></symbol>
<symbol id="tlib" viewBox="0 0 24 24"><path d="M1 2l6 5-6 5z" fill="#1c6fb8"/><rect x="5" y="12" width="6" height="12" fill="#3454c4"/><path d="M5 16l6-3M5 21l6-3" stroke="#fff"/><rect x="16" y="1" width="7" height="14" fill="#333"/><rect x="12" y="9" width="8" height="7" fill="#e8a12a" stroke="#222"/></symbol>
<symbol id="ck" viewBox="0 0 14 14"><path d="M1 7l3-1 2 3c2-4 4-6 7-8l1 1c-3 3-5 7-7 12H5z" fill="#14b82c"/></symbol>
<symbol id="fold" viewBox="0 0 14 14"><path d="M0 2h5l1 1h8v11H0z" fill="#f2d989" stroke="#8d7a3c"/><path d="M5 5h6v2H7v2h4v3H5v-2h4V8H5z" fill="#1c1ce0"/></symbol>
<symbol id="excl" viewBox="0 0 14 14"><ellipse cx="7" cy="4" rx="3.5" ry="3.6" fill="#f7e000" stroke="#a08a10"/><path d="M5 6l2 5 2-5z" fill="#f7e000" stroke="#a08a10"/><circle cx="7" cy="13" r="1.2" fill="#d0b000"/></symbol>
<symbol id="op" viewBox="0 0 14 14"><path d="M1 2v11h12L1 2z" fill="#fff" stroke="#111"/><path d="M5 8l6-6 2 1-6 6z" fill="#3a4fc4"/></symbol>
<symbol id="ophole" viewBox="0 0 14 14"><rect x="5" y="0" width="4" height="6" fill="#3a4fc4"/><path d="M0 7h14M3 7v6M11 7v6" stroke="#1a8a8a" stroke-width="1.5" fill="none"/><path d="M6 7v6M8 7v6" stroke="#1a2a8a"/></symbol>
<symbol id="op2d" viewBox="0 0 14 14"><path d="M1 1v12h12" fill="none" stroke="#333" stroke-width="1.4"/><rect x="5" y="1" width="3" height="9" fill="#3a4fc4"/><path d="M9 3h3M9 6h3" stroke="#3a4fc4"/></symbol>
<symbol id="dt" viewBox="0 0 14 14"><path d="M3 2q4-2 8 0v8q-1 4-4 4t-4-4z" fill="#556" stroke="#223"/><path d="M3 6l8-3M3 10l8-3" stroke="#dde" stroke-width="1.5"/></symbol>
<symbol id="mt2" viewBox="0 0 14 14"><rect x="3" y="1" width="8" height="13" fill="#4456bc"/><path d="M3 3l8 2M3 7l8 2M3 11l8 2" stroke="#c6cff2" stroke-dasharray="1 1"/></symbol>
</svg>

<div class="app">
  <header class="title">
    <span class="ttxt">NX 12.0.0.27 - 加工</span>
    <span class="siem">SIEMENS</span>
    <span class="wbtn"></span>
  </header>
  <nav class="menu">
    <span class="mi off1 w43">件<b>(F)</b></span><span class="mi w55">编辑<b>(E)</b></span><span class="mi w55">视图<b>(V)</b></span><span class="mi w55">插入<b>(S)</b></span><span class="mi w55">格式<b>(R)</b></span><span class="mi w55">工具<b>(T)</b></span><span class="mi w55">装配<b>(A)</b></span><span class="mi w55">信息<b>(I)</b></span><span class="mi w67">分析<b>(L)</b></span><span class="mi w67">首选项<b>(P)</b></span><span class="mi w91">浩强工具<b>v2.60</b></span><span class="mi w55">窗口<b>(O)</b></span><span class="mi w60">GC工具箱</span><span class="mi w98">燕秀UG模具<b>9.23</b></span><span class="mi w67">星空 <b>V7.4</b></span><span class="mi w61">自动刀号</span><span class="mi">帮助<b>(H)</b></span>
  </nav>

  <section class="tb">
    <div class="lg">
      <svg class="i neg15"><use href="#logo"/></svg><span class="start">启动</span><i class="c c8"></i>
      <svg class="i"><use href="#doc"/></svg><svg class="i"><use href="#open"/></svg><svg class="i"><use href="#save"/></svg><i class="s"></i>
      <svg class="i off"><use href="#undo"/></svg><i class="c"></i><i class="s"></i>
      <svg class="i"><use href="#mt"/></svg><i class="c"></i><i class="s"></i>
      <span class="gsq"></span><i class="c"></i><i class="s"></i>
      <svg class="i"><use href="#inf"/></svg><i class="s s8"></i>
      <span class="search"><span class="ph">查找命令</span><svg class="mag" viewBox="0 0 16 16"><circle cx="9.5" cy="6.5" r="5" fill="#eee" stroke="#444"/><path d="M6 10l-5 5" stroke="#444" stroke-width="2"/></svg></span><i class="c c14"></i><i class="s"></i><i class="g"></i>
      <svg class="i"><use href="#fit"/></svg><i class="c"></i><svg class="i"><use href="#rend"/></svg><i class="c"></i><svg class="i"><use href="#cub"/></svg><i class="c"></i><svg class="i off2"><use href="#tan"/></svg><svg class="i off2"><use href="#gf"/></svg><i class="c"></i><svg class="i"><use href="#win"/></svg><i class="c"></i><i class="s"></i>
      <svg class="i"><use href="#ba"/></svg><svg class="i"><use href="#ba2"/></svg><i class="c"></i><i class="s"></i><i class="g"></i>
      <svg class="i off"><use href="#tp"/></svg><svg class="i off"><use href="#tp2"/></svg><i class="c"></i><svg class="i off"><use href="#tp2"/></svg><i class="c"></i><svg class="i off"><use href="#tp4"/></svg><i class="c"></i><i class="c c10"></i><i class="s"></i><i class="g"></i>
      <svg class="i"><use href="#lst"/></svg><svg class="i"><use href="#net"/></svg><i class="c"></i><i class="s"></i><svg class="i"><use href="#inf"/></svg>
    </div>
    <div class="rg">
      <svg class="i"><use href="#open"/></svg><svg class="i"><use href="#savw"/></svg><svg class="i"><use href="#sw"/></svg><svg class="i"><use href="#calc"/></svg><svg class="i"><use href="#moon"/></svg><svg class="i"><use href="#frac"/></svg><i class="c"></i><i class="rule"></i><span class="blank"></span>
    </div>
  </section>

  <section class="tb">
    <div class="lg">
      <svg class="i neg17"><use href="#wrn"/></svg><svg class="i"><use href="#msc"/></svg><svg class="i off"><use href="#cp"/></svg><svg class="i off"><use href="#cp"/></svg><svg class="i off"><use href="#clip"/></svg><svg class="i"><use href="#mx"/></svg><svg class="i"><use href="#mi"/></svg><svg class="i off"><use href="#gt"/></svg><i class="c c10"></i><i class="s"></i><i class="g"></i>
      <svg class="i off"><use href="#mf"/></svg><svg class="i off"><use href="#sa"/></svg><svg class="i off"><use href="#chk"/></svg><svg class="i off"><use href="#sp"/></svg><svg class="i off"><use href="#ck2"/></svg><svg class="i off"><use href="#bk"/></svg><i class="s"></i>
      <svg class="i off"><use href="#gm"/></svg><svg class="i"><use href="#dl"/></svg><svg class="i"><use href="#mc"/></svg><i class="c c10"></i><i class="s s5"></i><i class="g g5"></i>
      <svg class="i off"><use href="#st"/></svg><svg class="i off"><use href="#sa"/></svg><svg class="i sel"><use href="#hb1"/></svg><svg class="i sel"><use href="#hb2"/></svg><svg class="i"><use href="#cir"/></svg><svg class="i"><use href="#cur"/></svg><svg class="i"><use href="#pa1"/></svg><svg class="i"><use href="#pa2"/></svg><svg class="i"><use href="#pa3"/></svg><svg class="i"><use href="#rul"/></svg><svg class="i"><use href="#h1"/></svg><svg class="i"><use href="#h2"/></svg><svg class="i"><use href="#h3"/></svg><svg class="i"><use href="#ra"/></svg><svg class="i"><use href="#plus"/></svg><svg class="i"><use href="#st"/></svg><span class="more">»<i class="c c10"></i></span><i class="s"></i><i class="g"></i>
    </div>
    <div class="rg">
      <svg class="i"><use href="#bx"/></svg><i class="c c10"></i><svg class="i"><use href="#ax"/></svg><svg class="i n"><use href="#xd"/></svg><i class="sp2"></i><svg class="i"><use href="#stk"/></svg><svg class="i"><use href="#al"/></svg><svg class="i"><use href="#ar"/></svg><svg class="i"><use href="#tl"/></svg><svg class="i"><use href="#tr"/></svg><svg class="i"><use href="#tl2"/></svg><svg class="i"><use href="#tr2"/></svg><svg class="i"><use href="#yc"/></svg><svg class="i"><use href="#gc"/></svg><svg class="i"><use href="#wc"/></svg><svg class="i"><use href="#lamp"/></svg><svg class="i"><use href="#ora"/></svg>
    </div>
  </section>

  <section class="tb">
    <div class="lg">
      <svg class="i neg17"><use href="#ora"/></svg><svg class="i"><use href="#rc"/></svg><svg class="i"><use href="#stamp"/></svg><svg class="i"><use href="#ib"/></svg><svg class="i"><use href="#xd"/></svg><svg class="i"><use href="#cp1"/></svg><svg class="i"><use href="#wc2"/></svg><svg class="i"><use href="#rb"/></svg><svg class="i"><use href="#rg"/></svg><svg class="i"><use href="#yb"/></svg><span class="more m16">»<i class="c c10"></i></span><i class="s s4"></i><i class="g"></i>
      <svg class="i"><use href="#dm"/></svg><svg class="i"><use href="#sq2"/></svg><svg class="i"><use href="#lft"/></svg><svg class="i"><use href="#rul3"/></svg><svg class="i"><use href="#pb"/></svg><svg class="i"><use href="#rr"/></svg><svg class="i"><use href="#hx"/></svg><svg class="i"><use href="#rel"/></svg><svg class="i"><use href="#stripe"/></svg><svg class="i"><use href="#ib"/></svg><svg class="i"><use href="#cyl"/></svg><svg class="i"><use href="#rc"/></svg><svg class="i"><use href="#pl"/></svg><svg class="i"><use href="#slice"/></svg><svg class="i"><use href="#mov"/></svg><svg class="i"><use href="#mv2"/></svg><svg class="i"><use href="#rect"/></svg><i class="c"></i><svg class="i"><use href="#hex"/></svg><i class="c"></i><svg class="i"><use href="#it"/></svg><svg class="i"><use href="#cha"/></svg><svg class="i"><use href="#csy"/></svg><svg class="i"><use href="#tar"/></svg><svg class="i"><use href="#co"/></svg><svg class="i"><use href="#tex"/></svg>
    </div>
    <div class="rg">
      <svg class="i neg19"><use href="#hxb"/></svg><svg class="i"><use href="#cam"/></svg><svg class="i"><use href="#lt"/></svg><svg class="i"><use href="#gw"/></svg><i class="c c10"></i><i class="s"></i><i class="g"></i><svg class="i"><use href="#lb"/></svg><i class="s"></i><svg class="i"><use href="#no"/></svg><svg class="i"><use href="#fil"/></svg><svg class="i"><use href="#dots"/></svg><svg class="i"><use href="#oc"/></svg><svg class="i"><use href="#osf"/></svg><svg class="i"><use href="#oc2"/></svg><svg class="i"><use href="#cu"/></svg><svg class="i"><use href="#wc3"/></svg><svg class="i"><use href="#al2"/></svg><svg class="i"><use href="#csy"/></svg>
    </div>
  </section>

  <section class="tb">
    <div class="lg">
      <svg class="i neg17"><use href="#nc"/></svg><svg class="i"><use href="#ed"/></svg><svg class="i"><use href="#ft"/></svg><svg class="i"><use href="#lre"/></svg><svg class="i"><use href="#gb"/></svg><svg class="i"><use href="#ys"/></svg><svg class="i"><use href="#br"/></svg><svg class="i"><use href="#bear"/></svg><svg class="i"><use href="#ftree"/></svg><svg class="i"><use href="#mw"/></svg><svg class="i"><use href="#mt12"/></svg><svg class="i"><use href="#ltr"/></svg><svg class="i"><use href="#ud"/></svg><svg class="i"><use href="#lli"/></svg><svg class="i"><use href="#mf"/></svg><svg class="i"><use href="#yc2"/></svg><i class="c"></i><i class="s s5"></i><i class="g"></i>
      <svg class="i"><use href="#gs"/></svg><svg class="i"><use href="#tbl"/></svg><svg class="i"><use href="#bt"/></svg><svg class="i"><use href="#fun"/></svg><svg class="i"><use href="#ms"/></svg><svg class="i"><use href="#ll"/></svg><svg class="i"><use href="#hole"/></svg><svg class="i"><use href="#cone"/></svg><svg class="i"><use href="#ma"/></svg><svg class="i"><use href="#map2"/></svg><svg class="i"><use href="#dw"/></svg><svg class="i"><use href="#mw"/></svg><svg class="i"><use href="#tt"/></svg><svg class="i"><use href="#vm"/></svg><svg class="i"><use href="#vmm"/></svg><svg class="i"><use href="#vt"/></svg><svg class="i"><use href="#wr"/></svg><svg class="i"><use href="#ta"/></svg>
    </div>
    <div class="rg">
      <svg class="i neg12"><use href="#lre"/></svg><svg class="i"><use href="#fitb"/></svg><svg class="i"><use href="#ilt"/></svg><i class="c c10"></i><i class="s"></i><i class="g"></i>
      <span class="sw"><i class="c1"></i></span><span class="sw"><i class="c2"></i></span><span class="sw"><i class="c3"></i></span><span class="sw"><i class="c4"></i></span><span class="sw"><i class="c5"></i></span><span class="sw"><i class="c6"></i></span><span class="sw"><i class="c7"></i></span><span class="sw"><i class="c8b"></i></span><span class="sw"><i class="c9"></i></span><span class="sw"><i class="c10b"></i></span><span class="sw"><i class="c11"></i></span><span class="sw"><i class="c12"></i></span>
    </div>
  </section>

  <section class="filter">
    <span class="fsel w95"><span>选择过滤器</span><i class="fdd"></i></span>
    <span class="fsel w121"><span>整个装配</span><i class="fdd"></i></span>
    <svg class="f off"><use href="#h3"/></svg><i class="s"></i>
    <svg class="f off"><use href="#fil"/></svg><svg class="f fb"><use href="#fil"/></svg><i class="c"></i><svg class="f off"><use href="#fil"/></svg><svg class="f off"><use href="#gm"/></svg><i class="s s4"></i>
    <svg class="f off"><use href="#hex"/></svg><svg class="f off"><use href="#cp1"/></svg><svg class="f off"><use href="#rect"/></svg><i class="c c14"></i><i class="s"></i>
    <svg class="f off"><use href="#h3"/></svg><svg class="f"><use href="#stripe"/></svg><svg class="f off"><use href="#cir"/></svg><svg class="f"><use href="#rel"/></svg><svg class="f"><use href="#cub"/></svg>
  </section>

  <section class="cue">
    <b class="cuetxt">选择类型、位置、组，并指定刀具名或从库中调用刀具</b>
    <i class="cdiv dv1"></i><i class="cdiv dv2"></i>
  </section>

  <div class="lower">
    <div class="left">
      <div class="tabs"><span class="tab"><span>5530500.prt</span><em>×</em></span></div>
      <div class="gfx">
        <svg class="triad" viewBox="0 0 100 65"><path d="M17 38l23-1 8 0 8 16-8 12H14l-1-15z" fill="#7d7d7d"/><path d="M17 38l11 12 28 3M28 50l-4 15" stroke="#909090" fill="none"/><path d="M2 58h33" stroke="#c23a3a" stroke-width="3"/><path d="M0 58l8-3v6z" fill="#c23a3a"/><path d="M37 54l8-30" stroke="#2aa02a" stroke-width="3"/><path d="M41 15l3 7 4-7M44 22v4" stroke="#2aa02a" stroke-width="1.5" fill="none"/><path d="M37 60v5" stroke="#1c3ce0" stroke-width="3"/><circle cx="37" cy="57" r="4.5" fill="#ddd"/></svg>
      </div>
    </div>
    <aside class="bar">
      <div class="grp g11">
        <i class="grip"></i>
        <svg class="v"><use href="#fa"/></svg><svg class="v"><use href="#tcv"/></svg><svg class="v"><use href="#cvb"/></svg><svg class="v"><use href="#cvr"/></svg>
        <i class="ba"></i>
      </div>
      <div class="grp g12">
        <i class="grip"></i>
        <svg class="v"><use href="#net"/></svg><svg class="v"><use href="#fa"/></svg><svg class="v"><use href="#fb"/></svg><svg class="v"><use href="#fc"/></svg><svg class="v"><use href="#fd"/></svg><svg class="v"><use href="#fe"/></svg><svg class="v"><use href="#ff"/></svg><svg class="v vsel"><use href="#fl"/></svg><svg class="v"><use href="#fs"/></svg>
        <i class="ba"></i>
      </div>
      <div class="grp g13">
        <i class="grip"></i>
        <svg class="v"><use href="#tbl"/></svg><svg class="v"><use href="#mt"/></svg><svg class="v"><use href="#vcb"/></svg><svg class="v"><use href="#ysb"/></svg><svg class="v"><use href="#ms"/></svg><svg class="v"><use href="#rc"/></svg>
        <i class="ba"></i>
      </div>
    </aside>
    <aside class="bar">
      <div class="grp g21">
        <i class="grip"></i>
        <svg class="v vsel"><use href="#vtree"/></svg><svg class="v"><use href="#vmt"/></svg><svg class="v"><use href="#vcb"/></svg><svg class="v"><use href="#vys"/></svg>
        <i class="ba"></i>
      </div>
      <div class="grp g22">
        <i class="grip"></i>
        <svg class="v"><use href="#hrt"/></svg><svg class="v"><use href="#sf"/></svg><svg class="v"><use href="#sh"/></svg><svg class="v"><use href="#cv"/></svg><svg class="v"><use href="#bl"/></svg><svg class="v"><use href="#cvr"/></svg><svg class="v"><use href="#cv"/></svg><svg class="v"><use href="#cvr"/></svg><svg class="v"><use href="#sb"/></svg><svg class="v"><use href="#tcv"/></svg><svg class="v"><use href="#dfo"/></svg><svg class="v"><use href="#fcy"/></svg><svg class="v"><use href="#sfb"/></svg><svg class="v"><use href="#uv"/></svg><svg class="v"><use href="#mpl"/></svg><svg class="v"><use href="#cy1"/></svg><svg class="v"><use href="#cy2"/></svg><svg class="v"><use href="#gpg"/></svg>
      </div>
    </aside>
    <main class="panel">
      <div class="phead"><i class="pbox"></i><b>工具导航器</b></div>
      <div class="frame">
        <div class="tw">
        <i class="gl g0"></i><i class="gl g1"></i><i class="gl g1b"></i><i class="gl g2"></i>
        <table class="grid">
          <colgroup><col class="c-n"><col class="c-i"><col class="c-k"><col class="c-t"><col class="c-u"><col class="c-m"><col class="c-j"><col class="c-y"><col class="c-d"><col class="c-q"><col class="c-f"><col class="c-s"><col class="c-o"><col class="c-x"></colgroup>
          <thead><tr><th class="n"><span class="zh">名称</span></th><th><span class="zh">刀轨</span></th><th><span class="zh">刀具</span></th><th><span class="zh">刀具名</span></th><th><span class="zh">号</span></th><th><span class="zh">时间</span></th><th><span class="zh">几.</span></th><th><span class="zh">余量</span></th><th><span class="zh">底...</span></th><th><span class="zh">切...</span></th><th><span class="zh">进给</span></th><th><span class="zh">速度</span></th><th><span class="zh">开.</span></th><th><span class="zh">描述</span></th></tr></thead>
          <tbody>
          <tr><td class="n"><div class="t root">NC_PROGRAM</div></td><td></td><td></td><td></td><td></td><td>02:33:59</td><td></td><td></td><td></td><td></td><td></td><td></td><td></td><td><span class="zh">ZX铝 - 燕尾..</span></td></tr>
          <tr><td class="n"><div class="t"><span class="sl"></span><svg class="tk"><use href="#fold"/></svg><span class="zh">未用项</span></div></td><td></td><td></td><td></td><td></td><td>00:00:00</td><td></td><td></td><td></td><td></td><td></td><td></td><td></td><td><span class="zh">ZX铝 - 燕尾..</span></td></tr>
          <tr><td class="n"><div class="t"><span class="sl"></span><svg class="tk"><use href="#ck"/></svg><svg class="tk"><use href="#fold"/></svg><span>PROGRAM</span></div></td><td></td><td></td><td></td><td></td><td>00:00:00</td><td></td><td></td><td></td><td></td><td></td><td></td><td></td><td>PROGRAM</td></tr>
          <tr><td class="n"><div class="t"><span class="sl bx"></span><svg class="tk"><use href="#ck"/></svg><svg class="tk"><use href="#fold"/></svg><span class="zh">一夹101</span></div></td><td></td><td></td><td></td><td></td><td>01:20:27</td><td></td><td></td><td></td><td></td><td></td><td></td><td></td><td><span class="zh">一夹</span>101</td></tr>
          <tr><td class="n"><div class="t d1"><span class="sl bx"></span><svg class="tk"><use href="#ck"/></svg><svg class="tk"><use href="#fold"/></svg><span>101</span></div></td><td></td><td></td><td></td><td></td><td>00:09:49</td><td></td><td></td><td></td><td></td><td></td><td></td><td></td><td>101</td></tr>
          <tr class="p"><td class="n"><div class="t d2"><span class="sl up"></span><svg class="tk"><use href="#ck"/></svg><svg class="tk"><use href="#op"/></svg><span class="zh">打...</span></div></td><td><svg class="tk"><use href="#dt"/></svg></td><td><svg class="ck"><use href="#ck"/></svg></td><td>DJ6</td><td>1</td><td>00:09:37</td><td>1</td><td></td><td></td><td>1.7000</td><td>70 mmpm</td><td>3000 rpm</td><td></td><td><span class="zh">打点</span></td></tr>
          <tr><td class="n"><div class="t d1"><span class="sl bx"></span><svg class="tk"><use href="#ck"/></svg><svg class="tk"><use href="#fold"/></svg><span>102</span></div></td><td></td><td></td><td></td><td></td><td>00:08:30</td><td></td><td></td><td></td><td></td><td></td><td></td><td></td><td>102</td></tr>
          <tr class="p"><td class="n"><div class="t d2"><span class="sl up"></span><svg class="tk"><use href="#ck"/></svg><svg class="tk"><use href="#op"/></svg><span class="zh">打...</span></div></td><td><svg class="tk"><use href="#dt"/></svg></td><td><svg class="ck"><use href="#ck"/></svg></td><td>E14</td><td>3</td><td>00:08:18</td><td>1</td><td></td><td></td><td><span class="zh">穿过...</span></td><td>200 mmpm</td><td>800 rpm</td><td></td><td><span class="zh">打点</span></td></tr>
          <tr><td class="n"><div class="t d1"><span class="sl bx"></span><svg class="tk"><use href="#ck"/></svg><svg class="tk"><use href="#fold"/></svg><span>102_COPY</span></div></td><td></td><td></td><td></td><td></td><td>00:01:26</td><td></td><td></td><td></td><td></td><td></td><td></td><td></td><td>102</td></tr>
          <tr class="p"><td class="n"><div class="t d2"><span class="sl up"></span><svg class="tk"><use href="#ck"/></svg><svg class="tk"><use href="#op"/></svg><span class="zh">打...</span></div></td><td><svg class="tk"><use href="#dt"/></svg></td><td><svg class="ck"><use href="#ck"/></svg></td><td>E14</td><td>3</td><td>00:01:14</td><td>1</td><td></td><td></td><td><span class="zh">穿过...</span></td><td>250 mmpm</td><td>650 rpm</td><td></td><td><span class="zh">打点</span></td></tr>
          <tr><td class="n"><div class="t d1"><span class="sl bx"></span><svg class="tk"><use href="#ck"/></svg><svg class="tk"><use href="#fold"/></svg><span>103</span></div></td><td></td><td></td><td></td><td></td><td>00:08:40</td><td></td><td></td><td></td><td></td><td></td><td></td><td></td><td>103</td></tr>
          <tr class="p"><td class="n"><div class="t d2"><span class="sl up"></span><svg class="tk"><use href="#ck"/></svg><svg class="tk"><use href="#ophole"/></svg><span class="zh">铣孔</span></div></td><td><svg class="tk"><use href="#mt2"/></svg></td><td><svg class="ck"><use href="#ck"/></svg></td><td>D10</td><td>4</td><td>00:08:28</td><td>1</td><td></td><td></td><td></td><td>1500 mmpm</td><td>9000 rpm</td><td></td><td><span class="zh">铣孔</span></td></tr>
          <tr><td class="n"><div class="t d1"><span class="sl bx"></span><svg class="tk"><use href="#ck"/></svg><svg class="tk"><use href="#fold"/></svg><span>104</span></div></td><td></td><td></td><td></td><td></td><td>00:00:41</td><td></td><td></td><td></td><td></td><td></td><td></td><td></td><td>104</td></tr>
          <tr class="p"><td class="n"><div class="t d2"><span class="sl up"></span><svg class="tk"><use href="#ck"/></svg><svg class="tk"><use href="#op2d"/></svg><span>2D</span></div></td><td><svg class="tk"><use href="#dt"/></svg></td><td><svg class="ck"><use href="#ck"/></svg></td><td>DJ6</td><td>1</td><td>00:00:29</td><td>1</td><td>-0....</td><td>0.0000</td><td>0.0000</td><td>1000 mmpm</td><td>10000 rpm</td><td></td><td>2D</td></tr>
          <tr><td class="n"><div class="t d1"><span class="sl"></span><svg class="tk"><use href="#ck"/></svg><svg class="tk"><use href="#fold"/></svg><span>105</span></div></td><td></td><td></td><td></td><td></td><td>00:00:00</td><td></td><td></td><td></td><td></td><td></td><td></td><td></td><td>105</td></tr>
          <tr><td class="n"><div class="t d1"><span class="sl"></span><svg class="tk"><use href="#ck"/></svg><svg class="tk"><use href="#fold"/></svg><span>106</span></div></td><td></td><td></td><td></td><td></td><td>00:00:00</td><td></td><td></td><td></td><td></td><td></td><td></td><td></td><td>106</td></tr>
          <tr><td class="n"><div class="t d1"><span class="sl"></span><svg class="tk"><use href="#ck"/></svg><svg class="tk"><use href="#fold"/></svg><span>107</span></div></td><td></td><td></td><td></td><td></td><td>00:00:00</td><td></td><td></td><td></td><td></td><td></td><td></td><td></td><td>107</td></tr>
          <tr><td class="n"><div class="t d1"><span class="sl"></span><svg class="tk"><use href="#ck"/></svg><svg class="tk"><use href="#fold"/></svg><span>108</span></div></td><td></td><td></td><td></td><td></td><td>00:00:00</td><td></td><td></td><td></td><td></td><td></td><td></td><td></td><td>108</td></tr>
          <tr><td class="n"><div class="t d1"><span class="sl"></span><svg class="tk"><use href="#ck"/></svg><svg class="tk"><use href="#fold"/></svg><span>109</span></div></td><td></td><td></td><td></td><td></td><td>00:00:00</td><td></td><td></td><td></td><td></td><td></td><td></td><td></td><td>109</td></tr>
          <tr><td class="n"><div class="t d1"><span class="sl"></span><svg class="tk"><use href="#ck"/></svg><svg class="tk"><use href="#fold"/></svg><span>110</span></div></td><td></td><td></td><td></td><td></td><td>00:00:00</td><td></td><td></td><td></td><td></td><td></td><td></td><td></td><td>110</td></tr>
          <tr><td class="n"><div class="t d1"><span class="sl"></span><svg class="tk"><use href="#ck"/></svg><svg class="tk"><use href="#fold"/></svg><span>111</span></div></td><td></td><td></td><td></td><td></td><td>00:00:00</td><td></td><td></td><td></td><td></td><td></td><td></td><td></td><td>111</td></tr>
          <tr><td class="n"><div class="t d1"><span class="sl"></span><svg class="tk"><use href="#ck"/></svg><svg class="tk"><use href="#fold"/></svg><span>112</span></div></td><td></td><td></td><td></td><td></td><td>00:00:00</td><td></td><td></td><td></td><td></td><td></td><td></td><td></td><td>112</td></tr>
          <tr><td class="n"><div class="t"><span class="sl bx"></span><svg class="tk"><use href="#excl"/></svg><svg class="tk"><use href="#fold"/></svg><span class="zh">二夹102</span></div></td><td></td><td></td><td></td><td></td><td>01:22:20</td><td></td><td></td><td></td><td></td><td></td><td></td><td></td><td><span class="zh">二夹</span>102</td></tr>
          <tr><td class="n"><div class="t d1"><span class="sl bx"></span><svg class="tk"><use href="#ck"/></svg><svg class="tk"><use href="#fold"/></svg><span>204</span></div></td><td></td><td></td><td></td><td></td><td>01:07:43</td><td></td><td></td><td></td><td></td><td></td><td></td><td></td><td>204</td></tr>
          <tr><td class="n"><div class="t d2"><span class="sl bx"></span><svg class="tk"><use href="#ck"/></svg><svg class="tk"><use href="#fold"/></svg><span>201</span></div></td><td></td><td></td><td></td><td></td><td>00:07:23</td><td></td><td></td><td></td><td></td><td></td><td></td><td></td><td>201</td></tr>
          <tr><td class="n"><div class="t d3"><span class="sl up"></span><svg class="tk"><use href="#ck"/></svg><svg class="tk"><use href="#op"/></svg><span class="zh">打</span></div></td><td></td><td><svg class="ck"><use href="#ck"/></svg></td><td>DJ6</td><td>1</td><td>00:07:23</td><td>2</td><td></td><td></td><td>1.5000</td><td>100 mmpm</td><td>2500 rpm</td><td></td><td><span class="zh">打点</span></td></tr>
          <tr><td class="n"><div class="t d2"><span class="sl bx"></span><svg class="tk"><use href="#ck"/></svg><svg class="tk"><use href="#fold"/></svg><span>202</span></div></td><td></td><td></td><td></td><td></td><td>00:31:34</td><td></td><td></td><td></td><td></td><td></td><td></td><td></td><td>202</td></tr>
          <tr class="p"><td class="n"><div class="t d3"><span class="sl up"></span><svg class="tk"><use href="#ck"/></svg><svg class="tk"><use href="#op"/></svg><span class="zh">打</span></div></td><td><svg class="tk"><use href="#dt"/></svg></td><td><svg class="ck"><use href="#ck"/></svg></td><td>E6.9</td><td>5</td><td>00:31:22</td><td>2</td><td></td><td></td><td>17.5000</td><td>150 mmpm</td><td>900 rpm</td><td></td><td><span class="zh">打点</span></td></tr>
          <tr><td class="n"><div class="t d2"><span class="sl bx"></span><svg class="tk"><use href="#ck"/></svg><svg class="tk"><use href="#fold"/></svg><span>2...</span></div></td><td></td><td></td><td></td><td></td><td>00:16:48</td><td></td><td></td><td></td><td></td><td></td><td></td><td></td><td>203</td></tr>
          <tr class="p"><td class="n"><div class="t d3"><span class="sl up"></span><svg class="tk"><use href="#ck"/></svg><svg class="tk"><use href="#op2d"/></svg><span>2.</span></div></td><td><svg class="tk"><use href="#dt"/></svg></td><td><svg class="ck"><use href="#ck"/></svg></td><td>DJ6</td><td>1</td><td>00:16:36</td><td>2</td><td>-0....</td><td>0.0000</td><td>0.0000</td><td>1000 mmpm</td><td>10000 rpm</td><td></td><td>2D</td></tr>
          <tr><td class="n"><div class="t d2"><span class="sl bx"></span><svg class="tk"><use href="#ck"/></svg><svg class="tk"><use href="#fold"/></svg><span>2...</span></div></td><td></td><td></td><td></td><td></td><td>00:11:57</td><td></td><td></td><td></td><td></td><td></td><td></td><td></td><td>202</td></tr>
          <tr class="p"><td class="n"><div class="t d3"><span class="sl up"></span><svg class="tk"><use href="#ck"/></svg><svg class="tk"><use href="#op"/></svg><span class="zh">打</span></div></td><td><svg class="tk"><use href="#dt"/></svg></td><td><svg class="ck"><use href="#ck"/></svg></td><td>M8-1.25</td><td>6</td><td>00:11:45</td><td>2</td><td></td><td></td><td>14.5000</td><td>375 mmpm</td><td>300 rpm</td><td></td><td><span class="zh">打点</span></td></tr>
          </tbody>
        </table>
        </div>
        <div class="hscroll"><span class="larr"></span><span class="thumb"></span></div>
      </div>
      <div class="pfoot"><span class="ptab"></span></div>
    </main>
  </div>
</div>

<div class="ring"><div class="ringin"><span class="pct">75<small>%</small></span><span class="spd"><em>↑</em> 0K/s</span></div></div>

<section class="dlg">
  <div class="dt"><svg class="gear" viewBox="0 0 16 16"><circle cx="8" cy="8" r="4.5" fill="none" stroke="#fff" stroke-width="3"/><path d="M8 0v3M8 13v3M0 8h3M13 8h3M2 2l2 2M12 12l2 2M14 2l-2 2M2 14l2-2" stroke="#fff" stroke-width="2"/></svg><span class="dttl">创建刀具</span><svg class="dx" viewBox="0 0 12 12"><path d="M1 1l10 10M11 1L1 11" stroke="#fff" stroke-width="3"/></svg></div>
  <div class="db">
    <div class="sec">
      <div class="sh"><b>类型</b><i class="chev"></i></div>
      <div class="sb sb35"><div class="dsel"><span>ZX<span class="zh">铝</span></span><i class="dd"></i></div></div>
    </div>
    <div class="sec">
      <div class="sh"><b>库</b><i class="chev"></i></div>
      <div class="sb sb81">
        <div class="lr first"><span>从库中调用刀具</span><svg class="lbt"><use href="#tlib"/></svg></div>
        <div class="lr"><span>从库中调用设备</span><svg class="lbt hot"><use href="#dlib"/></svg></div>
      </div>
    </div>
    <div class="sec">
      <div class="sh"><b>刀具子类型</b><i class="chev"></i></div>
      <div class="sb sb85 subs">
        <svg class="st on"><use href="#dr"/></svg><svg class="st"><use href="#em"/></svg><svg class="st"><use href="#em"/></svg><svg class="st"><use href="#em"/></svg><svg class="st"><use href="#em"/></svg><svg class="st"><use href="#dr"/></svg><svg class="st"><use href="#em"/></svg><svg class="st"><use href="#dr"/></svg>
      </div>
    </div>
    <div class="sec">
      <div class="sh"><b>位置</b><i class="chev"></i></div>
      <div class="sb sb35 prow"><span>刀具</span><div class="dsel w106"><span class="l">GENERIC_MACHIN</span><i class="dd"></i></div></div>
    </div>
    <div class="sec last">
      <div class="sh"><b>名称</b><i class="chev"></i></div>
      <div class="sb sb34"><div class="dinp"><mark>E5.1_1</mark></div></div>
    </div>
    <div class="foot"><button class="btn ok">确定</button><button class="btn">应用</button><button class="btn">取消</button></div>
  </div>
</section>

<div class="tip">从库中调用设备</div>
<svg class="hl" viewBox="0 0 116 72"><ellipse cx="58" cy="36" rx="52" ry="30" fill="none" stroke="#ef3b3e" stroke-width="6.5"/></svg>
<div class="wm">UG爱好者论坛@a82716624</div>
</body>
</html>
```
FILE: styles.css
```css
*{box-sizing:border-box}
html,body{margin:0;padding:0}
body{width:1831px;height:945px;overflow:hidden;position:relative;background:#e4e4e4;color:#222;font:12px "Noto Sans CJK SC","Noto Sans",sans-serif}
.sprite{position:absolute;width:0;height:0;overflow:hidden}
i,em{font-style:normal;display:block}
.app{display:flex;flex-direction:column;height:945px}

/* title + menu */
.title{height:22px;background:#1a1a1a;color:#fff;display:flex;align-items:center;flex:none;overflow:hidden}
.ttxt{font:14px "Liberation Sans","Noto Sans CJK SC",sans-serif;margin-left:-3px;color:#f4f4f4}
.siem{margin-left:auto;font:bold 12px "Liberation Sans",sans-serif;letter-spacing:.65px;margin-right:24px;color:#fff}
.wbtn{width:4px;height:16px;background:#555;border-radius:3px 0 0 3px;margin-top:-6px}
.menu{height:23px;background:#e2e2e2;display:flex;align-items:center;flex:none;border-bottom:1px solid #c4c4c4;white-space:nowrap;color:#1c1c1c}
.mi{display:block;flex:none;line-height:22px}
.mi b{font:400 12px "Liberation Mono",monospace;letter-spacing:-1.2px}
.off1{margin-left:1px}.w43{width:43px}.w55{width:55px}.w60{width:60px}.w61{width:61px}.w67{width:67px}.w91{width:91px}.w98{width:98px}

/* toolbars */
.tb{height:34px;flex:none;display:grid;grid-template-columns:1375px 1fr;background:linear-gradient(#e8e8e8,#dadada);border-bottom:1px solid #bcbcbc;border-top:1px solid #f2f2f2;overflow:hidden}
.lg,.rg{display:flex;align-items:center;min-width:0;height:32px}
.lg{overflow:hidden}
.i{flex:none;width:31px;height:26px}
.i.n{width:27px}.sp2{width:2px;flex:none}
.neg12{margin-left:-12px}.neg15{margin-left:-15px}.neg17{margin-left:-17px}.neg19{margin-left:-19px}
.i.sel{width:29px;height:31px;margin:0 1px;background:#fff;border:1px solid #6a6a6a;border-radius:3px;padding:2px}
.off{opacity:.42;filter:grayscale(1)}
.off2{opacity:.8;filter:saturate(.8)}
.c{flex:none;width:12px;height:14px;position:relative}
.c::after{content:"";position:absolute;left:50%;bottom:3px;margin-left:-3px;border:3px solid transparent;border-top:3px solid #111;border-bottom:0}
.c8{width:8px}.c10{width:10px}.c14{width:14px}
.s{flex:none;width:6px;height:30px;position:relative}
.s::after{content:"";position:absolute;left:50%;top:0;bottom:0;border-left:1px solid #b4b4b4;box-shadow:1px 0 0 #f6f6f6}
.s4{width:4px}.s5{width:5px}.s8{width:8px}
.g{flex:none;width:6px;height:26px;background:radial-gradient(circle,#9c9c9c 1px,transparent 1.2px) center top/3px 4px repeat-y}
.g5{width:5px}
.start{flex:none;width:26px;font-size:13px;color:#111}
.gsq{flex:none;width:31px;height:26px;background:linear-gradient(#a8a8ac,#a8a8ac) center/21px 24px no-repeat}
.search{flex:none;width:110px;height:21px;background:#fff;border:1px solid #bbb;display:flex;align-items:center;padding:0 3px;justify-content:space-between;font-size:13px;color:#aaa;border-radius:2px}
.mag{width:16px;height:16px}
.more{flex:none;width:21px;height:30px;font:bold 14px/14px "Liberation Sans",sans-serif;color:#111;text-align:center}
.more .c{margin:3px auto 0;width:10px}
.more.m16{width:16px}
.rule{flex:none;width:1px;height:33px;margin-left:1px;background:#bbb}
.blank{flex:1 1 auto;height:33px;background:#e4e4e4;min-width:300px}
.sw{flex:none;width:31px;height:24px;display:flex;justify-content:center}
.sw i{width:24px;height:24px}
.c1{background:#ff00ff}.c2{background:#ff0000}.c3{background:#ff9900}.c4{background:#ccff33}.c5{background:#009900}.c6{background:#00ffff}.c7{background:#0099ff}.c8b{background:#0000ff}.c9{background:#6633cc}.c10b{background:#996633}.c11{background:#f5f5f5}.c12{background:#000}

/* filter + cue */
.filter{height:28px;flex:none;background:#e2e2e2;display:flex;align-items:center;border-bottom:1px solid #c4c4c4;overflow:hidden}
.fsel{flex:none;height:18px;border:1px solid #b8b8b8;border-radius:4px;background:#d6d6d6;color:#a2a2a2;font-size:14px;line-height:16px;display:flex;justify-content:space-between;overflow:hidden;white-space:nowrap}
.w95{width:95px;margin-right:8px}.w95 span{margin-left:-14px}.w121{width:121px;margin-right:5px}.w121 span{margin-left:1px}
.fdd{width:17px;height:16px;background:linear-gradient(#f2f2f2,#ccc);position:relative;flex:none;border-left:1px solid #bbb}
.fdd::after{content:"";position:absolute;left:3px;top:5px;border:5px solid transparent;border-top:6px solid #8c8c8c;border-bottom:0}
.f{flex:none;width:23px;height:20px}
.f.fb{width:20px;background:#eee;outline:1px solid #c0261a;outline-offset:-1px}
.cue{height:22px;flex:none;background:#e4e4e4;border-bottom:1px solid #bbb;display:flex;align-items:center;position:relative;overflow:hidden}
.cuetxt{font-size:13px;font-weight:700;margin-left:-23px;color:#111;white-space:nowrap;flex:none}
.cdiv{position:absolute;top:0;bottom:0;border-left:1px solid #fff;box-shadow:-1px 0 0 #bbb}
.dv1{left:896px}.dv2{left:1817px}

/* lower */
.lower{flex:1;display:flex;min-height:0}
.left{width:958px;flex:none;display:flex;flex-direction:column}
.tabs{height:18px;flex:none;background:#f0f0f0;border-top:1px solid #e9e9e9}
.tab{display:flex;width:89px;height:17px;background:#4b4b4b;color:#e6e6e6;font:12px/16px "Liberation Mono",monospace;letter-spacing:-1.2px;align-items:center;justify-content:space-between;padding-right:6px;overflow:hidden}
.tab em{color:#9c9c9c;font:bold 14px "Liberation Sans",sans-serif}
.gfx{flex:1;background:#22242a;position:relative;overflow:hidden}
.triad{position:absolute;left:0;bottom:0;width:100px;height:65px}

.bar{width:34px;flex:none;background:#e8e8e8;display:flex;flex-direction:column;align-items:center;overflow:hidden}
.grp{width:34px;background:#dcdcdc;display:flex;flex-direction:column;align-items:center;border-bottom:1px solid #c8c8c8;flex:none}
.grip{height:3px;width:24px;background:radial-gradient(circle,#a0a0a0 1px,transparent 1.2px) left center/4px 3px repeat-x;flex:none}
.g11{margin-top:9px}.g11 .grip{margin:2px 0}
.g12{margin-top:12px}.g12 .grip{margin:1px 0}
.g13{margin-top:40px;border-bottom:0}.g13 .grip{margin:4px 0 3px}
.g21{margin-top:1px}.g21 .grip{margin:5px 0 2px}
.g22{margin-top:0;border-bottom:0}.g22 .grip{margin:5px 0 2px}
.v{flex:none;width:34px;height:31px;padding:3px 4px}
.v.vsel{width:30px;margin:0 2px;padding:1px;background:#fff;border:1px solid #666;border-radius:3px}
.ba{flex:none;width:100%;height:12px;position:relative}
.ba::after{content:"";position:absolute;left:9px;top:3px;border:3px solid transparent;border-right:4px solid #111;border-left:0}
.g11 .ba{height:14px}.g12 .ba{height:16px}

.panel{flex:1;min-width:0;background:#ececec;display:flex;flex-direction:column;padding-left:11px;overflow:hidden}
.phead{height:31px;flex:none;display:flex;align-items:center;padding-left:3px;font-size:13px;color:#111}
.pbox{width:13px;height:11px;border:2px solid #111;margin-right:12px;flex:none}
.frame{height:675px;flex:none;border:1px solid #666;border-right:0;background:#fff;display:flex;flex-direction:column}
.tw{flex:1;position:relative;overflow:hidden;min-height:0}
.grid{width:793px;border-collapse:separate;border-spacing:0;table-layout:fixed;color:#222;font:12px "Liberation Mono","Noto Sans CJK SC",monospace;letter-spacing:-1.2px}
.zh{letter-spacing:0;font:12px/14px "Noto Sans CJK SC",sans-serif}
.c-n{width:125px}.c-i{width:43px}.c-k{width:36px}.c-t{width:57px}.c-u{width:28px}.c-m{width:59px}.c-j{width:31px}.c-y{width:45px}.c-d{width:45px}.c-q{width:51px}.c-f{width:85px}.c-s{width:73px}.c-o{width:31px}.c-x{width:84px}
.grid th{height:16px;padding:0 0 0 5px;text-align:left;font-weight:400;background:linear-gradient(#fafafa,#d6d6d6);border-right:1px solid #bbb;border-bottom:1px solid #888;white-space:nowrap;overflow:hidden;line-height:11px}
.grid th .zh{line-height:11px}
.grid td{height:20px;padding:0 0 0 5px;border-right:1px solid #e4e4e4;border-bottom:1px solid #e4e4e4;white-space:nowrap;overflow:hidden;line-height:14px}
.grid td.n,.grid th.n{padding-left:0;border-right:1px solid #111}
.grid th.n{padding-left:6px}
.grid td:nth-child(7),.grid th:nth-child(7){border-right:3px double #e4e4e4}
.grid tbody tr:nth-child(even) td{background:#f6f6f6}
.p td,.p td.n{color:#5f2fd0}
.t{display:flex;align-items:center;height:19px;padding-left:5px;position:relative;white-space:nowrap;overflow:hidden}
.t.root{padding-left:3px}
.t.d1{padding-left:24px}.t.d2{padding-left:43px}.t.d3{padding-left:62px}
.t>span:last-child{margin-left:5px}
.t>.sl{margin:0}
.sl{flex:none;width:15px;height:19px;position:relative;display:block}
.sl::after{content:"";position:absolute;left:4px;right:1px;top:9px;border-top:1px dotted #888}
.sl.bx::before{content:"";position:absolute;left:0;top:5px;width:9px;height:9px;border:1px solid #888;border-radius:2px;background:linear-gradient(#666,#666) center/5px 1px no-repeat #f4f4f4;z-index:2}
.sl.up::before{content:"";position:absolute;left:4px;top:-1px;height:10px;border-left:1px dotted #888}
.tk{flex:none;width:14px;height:14px;margin-right:1px}
.ck{width:14px;height:14px;display:block;margin-left:2px}
td>.tk{display:block}
.gl{position:absolute;border-left:1px dotted #888;z-index:1}
.g0{left:9px;top:37px;bottom:0}
.g1{left:28px;top:97px;height:340px}
.g1b{left:28px;top:477px;bottom:0}
.g2{left:47px;top:497px;height:140px}
.hscroll{height:16px;flex:none;display:flex;background:#ececec}
.larr{width:16px;flex:none;position:relative}
.larr::after{content:"";position:absolute;left:5px;top:4px;width:7px;height:7px;border-left:2px solid #444;border-bottom:2px solid #444;transform:rotate(45deg)}
.thumb{flex:1;background:#c8c8c8}
.pfoot{flex:1;padding-left:331px;overflow:hidden}
.ptab{display:block;width:155px;height:12px;background:#fff;border:1px solid #aaa;margin-top:4px}

/* ring */
.ring{position:absolute;left:909px;top:218px;width:66px;height:66px;border-radius:50%;background:conic-gradient(#2ed573 0 75%,#dcdcdc 75%);box-shadow:0 0 0 2px rgba(255,255,255,.35);display:flex;align-items:center;justify-content:center}
.ringin{width:57px;height:57px;border-radius:50%;background:radial-gradient(circle at 50% 30%,#fff,#dff2e6);display:flex;flex-direction:column;align-items:center;justify-content:center;color:#333}
.pct{font:24px/24px "Liberation Sans",sans-serif;color:#444}
.pct small{font-size:11px}
.spd{font:9px/12px "Liberation Sans",sans-serif;color:#666}
.spd em{display:inline;color:#2c8fe0;margin-right:3px}

/* dialog */
.dlg{position:absolute;left:1084px;top:0;width:289px;height:447px;display:flex;flex-direction:column;background:#151515}
.dt{height:17px;flex:none;display:flex;align-items:center;color:#eee}
.gear{width:13px;height:13px;margin-left:5px;flex:none}
.dttl{margin-left:9px;padding-left:5px;border-left:1px solid #888;font-size:13px;line-height:17px;height:17px}
.dx{width:12px;height:12px;margin-left:auto;margin-right:4px}
.db{height:423px;flex:none;background:#e8e8e8;padding:5px 6px 0 7px;display:flex;flex-direction:column}
.sec{margin-bottom:1px;flex:none}
.sec.last{margin-bottom:0}
.sh{height:22px;background:linear-gradient(#f0f0f0 0,#f0f0f0 50%,#dcdcdc 100%);border-bottom:1px solid #999;display:flex;align-items:center;padding-left:6px;position:relative;font-size:13px;color:#222}
.sh b{font-weight:700}
.chev{position:absolute;right:0;top:0;width:22px;height:21px;border-left:1px solid #c4c4c4}
.chev::after{content:"";position:absolute;left:6px;top:9px;width:9px;height:9px;border-left:3px solid #555;border-top:3px solid #555;transform:rotate(45deg)}
.sb{background:#c9c9c9;padding:0 9px;border-right:1px solid #bbb}
.sb35{height:35px;padding-top:8px}.sb34{height:34px;padding-top:8px}.sb81{height:81px;padding-top:8px}.sb85{height:85px}
.dsel{height:18px;background:#fff;border:1px solid #777;border-radius:4px;display:flex;justify-content:space-between;align-items:stretch;overflow:hidden;font:12px/16px "Liberation Mono","Noto Sans CJK SC",monospace;letter-spacing:-1.2px;padding-left:4px;white-space:nowrap}
.dsel .zh{line-height:16px}
.dd{width:17px;flex:none;background:linear-gradient(#5fa5e8,#cfe7fb);position:relative;border-left:1px solid #4a7ab0}
.dd::after{content:"";position:absolute;left:3px;top:4px;border:5px solid transparent;border-top:7px solid #111;border-bottom:0}
.dsel .l{overflow:hidden;min-width:0}
.lr{height:30px;display:flex;justify-content:space-between;align-items:center;margin-bottom:4px}
.lr.first{align-items:flex-start}
.lr.first span{line-height:14px}
.lbt{flex:none;width:30px;height:30px;padding:2px;border:1px solid #777;border-radius:3px;background:linear-gradient(#f0f0f0,#bcbcbc)}
.lbt.hot{background:linear-gradient(#5fb9ee,#d4f2ff)}
.subs{padding:9px 35px 0 36px;display:flex;flex-wrap:wrap;align-content:flex-start}
.st{flex:none;width:34px;height:34px;padding:5px}
.st.on{width:30px;height:30px;margin:2px;padding:2px;background:linear-gradient(#fbc494,#e9701c);border:1px solid #999;border-radius:3px}
.prow{display:flex;justify-content:space-between;align-items:flex-start}
.w106{width:106px}
.prow>span{line-height:18px}
.dinp{height:17px;background:#fff;border:1px solid #777;border-radius:4px;padding-left:2px;font:12px/15px "Liberation Mono",monospace;letter-spacing:-1.2px}
mark{background:#2c6fd0;color:#fff;display:inline-block;width:37px;padding-left:1px;letter-spacing:0;font-size:11px}
.foot{margin-top:3px;border-top:1px solid #fff;box-shadow:0 -1px 0 #c0c0c0;padding:6px 11px 0 0;display:flex;justify-content:flex-end;gap:8px;width:276px}
.btn{width:51px;height:18px;padding:0;border:1px solid #777;border-radius:3px;background:linear-gradient(#f5f5f5,#cfcfcf);font:13px/15px "Noto Sans CJK SC",sans-serif;color:#222}
.btn.ok{background:linear-gradient(#d5f5c8,#6fc76a);border-color:#4a8a4a}

/* overlays */
.tip{position:absolute;left:1350px;top:180px;width:98px;height:26px;background:#ededed;border:1px solid #bbb;border-radius:0 6px 6px 6px;padding-left:8px;line-height:24px;white-space:nowrap;color:#111}
.hl{position:absolute;left:1289px;top:132px;width:116px;height:72px}
.wm{position:absolute;right:-4px;top:922px;font:italic 16px "Liberation Serif","Noto Sans CJK SC",serif;color:#7c7c7c;text-shadow:0 0 2px #fff,0 0 2px #fff;white-space:nowrap}
```
